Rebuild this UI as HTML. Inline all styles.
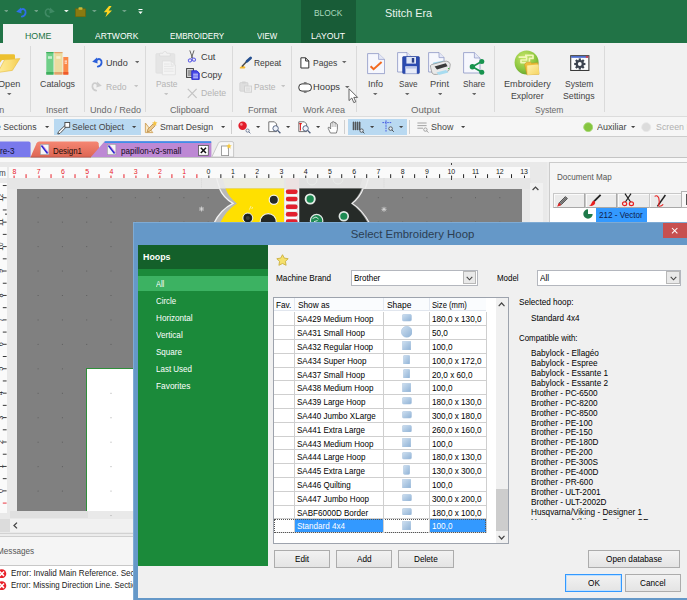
<!DOCTYPE html>
<html><head><meta charset="utf-8"><title>Stitch Era</title>
<style>
html,body{margin:0;padding:0;}
body{width:687px;height:600px;overflow:hidden;position:relative;background:#ececec;font-family:"Liberation Sans",sans-serif;}
#root{position:absolute;left:0;top:0;width:687px;height:600px;overflow:hidden;}
#root div,#root span,#root svg{position:absolute;}
#root span{white-space:nowrap;}
#root div{box-sizing:border-box;}
</style></head><body><div id="root">
<div style="left:0.00px;top:0.00px;width:687.00px;height:43.00px;background:#217346;"></div>
<div style="left:301.00px;top:0.00px;width:55.00px;height:43.00px;background:#185c37;"></div>
<div style="left:3.00px;top:24.00px;width:70.00px;height:19.50px;background:#f1f1f1;"></div>
<span style="left:24.50px;top:30.00px;font-size:9.80px;line-height:11.27px;color:#217346;transform:scaleX(0.901);transform-origin:0 50%;">HOME</span>
<span style="left:94.70px;top:30.00px;font-size:9.80px;line-height:11.27px;color:#fff;transform:scaleX(0.868);transform-origin:0 50%;">ARTWORK</span>
<span style="left:170.00px;top:30.00px;font-size:9.80px;line-height:11.27px;color:#fff;transform:scaleX(0.826);transform-origin:0 50%;">EMBROIDERY</span>
<span style="left:256.80px;top:30.00px;font-size:9.80px;line-height:11.27px;color:#fff;transform:scaleX(0.803);transform-origin:0 50%;">VIEW</span>
<span style="left:314.40px;top:7.00px;font-size:9.80px;line-height:11.27px;color:#a9d9bd;transform:scaleX(0.855);transform-origin:0 50%;">BLOCK</span>
<span style="left:311.40px;top:30.00px;font-size:9.80px;line-height:11.27px;color:#fff;transform:scaleX(0.886);transform-origin:0 50%;">LAYOUT</span>
<span style="left:385.00px;top:7.00px;font-size:10.89px;line-height:12.52px;color:#eaf3ee;">Stitch Era</span>
<svg style="left:3.64px;top:10.02px" width="4.72" height="2.36" viewBox="0 0 4.72 2.36"><path d="M0 0H4.72L2.36 2.36Z" fill="#6fa287"/></svg>
<svg style="left:33.64px;top:10.02px" width="4.72" height="2.36" viewBox="0 0 4.72 2.36"><path d="M0 0H4.72L2.36 2.36Z" fill="#6fa287"/></svg>
<svg style="left:63.94px;top:10.02px" width="4.72" height="2.36" viewBox="0 0 4.72 2.36"><path d="M0 0H4.72L2.36 2.36Z" fill="#e6efe9"/></svg>
<svg style="left:92.34px;top:10.02px" width="4.72" height="2.36" viewBox="0 0 4.72 2.36"><path d="M0 0H4.72L2.36 2.36Z" fill="#6fa287"/></svg>
<svg style="left:122.14px;top:10.02px" width="4.72" height="2.36" viewBox="0 0 4.72 2.36"><path d="M0 0H4.72L2.36 2.36Z" fill="#6fa287"/></svg>
<svg style="left:14.60px;top:5.80px" width="12" height="12" viewBox="0 0 12 12"><path d="M1.2 5.8 L6 1.4 L6.6 7.6Z" fill="#2f6fe8"/><path d="M5.4 4.4 C8 1.6 11 3.6 10.6 6.8 C10.3 9 8.6 10.2 6.8 10.6" fill="none" stroke="#2f6fe8" stroke-width="1.8" stroke-linecap="round"/></svg>
<svg style="left:44.00px;top:5.80px" width="12" height="12" viewBox="0 0 12 12"><path d="M10.8 5.8 L6 1.4 L5.4 7.6Z" fill="#3f8a64"/><path d="M6.6 4.4 C4 1.6 1 3.6 1.4 6.8 C1.7 9 3.4 10.2 5.2 10.6" fill="none" stroke="#3f8a64" stroke-width="1.6" stroke-linecap="round"/></svg>
<svg style="left:75.00px;top:6.50px" width="11" height="10" viewBox="0 0 11 10"><rect x="0.5" y="1.8" width="10" height="8" fill="#8a7a10" stroke="#6e6208" stroke-width="0.6"/><rect x="3.5" y="0.3" width="4" height="2.4" rx="0.8" fill="#c9b93a"/></svg>
<svg style="left:103.40px;top:5.80px" width="10" height="11.4" viewBox="0 0 10 11.4"><path d="M6 0 L0.8 6.2 H4.2 L2.4 11.2 L9 4.4 H5.6 L8.6 0Z" fill="#ffd320"/></svg>
<svg style="left:138.00px;top:9.20px" width="5" height="6" viewBox="0 0 5 6"><rect x="0.5" y="0" width="4" height="1" fill="#fff"/><path d="M0.3 2.6H4.7L2.5 5Z" fill="#fff"/></svg>
<div style="left:0.00px;top:43.00px;width:687.00px;height:74.00px;background:#f1f1f1;"></div>
<div style="left:0.00px;top:116.40px;width:687.00px;height:1.00px;background:#dcdcdc;"></div>
<div style="left:29.50px;top:45.50px;width:1.00px;height:66.50px;background:#dadada;"></div>
<div style="left:84.00px;top:45.50px;width:1.00px;height:66.50px;background:#dadada;"></div>
<div style="left:145.30px;top:45.50px;width:1.00px;height:66.50px;background:#dadada;"></div>
<div style="left:231.90px;top:45.50px;width:1.00px;height:66.50px;background:#dadada;"></div>
<div style="left:291.00px;top:45.50px;width:1.00px;height:66.50px;background:#dadada;"></div>
<div style="left:355.80px;top:45.50px;width:1.00px;height:66.50px;background:#dadada;"></div>
<div style="left:493.70px;top:45.50px;width:1.00px;height:66.50px;background:#dadada;"></div>
<div style="left:603.50px;top:45.50px;width:1.00px;height:66.50px;background:#dadada;"></div>
<svg style="left:-6.00px;top:53.00px" width="27" height="22" viewBox="0 0 27 22"><defs><linearGradient id="fg" x1="0" y1="0" x2="1" y2="0"><stop offset="0" stop-color="#fff0a8"/><stop offset="0.6" stop-color="#fbe07a"/><stop offset="1" stop-color="#f4cc52"/></linearGradient></defs><path d="M0 2.6 Q0 1.2 1.5 1.2 H19.6 Q21 1.2 21 2.6 V7 H8 L0 18Z" fill="#ecc030"/>
<path d="M0 19.4 L4 19.2 L10.6 6.8 L25.9 5.6 L18.4 17.4 L6 19.2Z" fill="url(#fg)" stroke="#e8bc3c" stroke-width="0.6"/></svg>
<span style="left:-2.30px;top:78.00px;font-size:9.80px;line-height:11.27px;color:#444;transform:scaleX(0.930);transform-origin:0 50%;">Open</span>
<svg style="left:7.06px;top:93.18px" width="4.48" height="2.24" viewBox="0 0 4.484 2.242"><path d="M0 0H4.484L2.242 2.242Z" fill="#666"/></svg>
<span style="left:-15.13px;top:104.00px;font-size:9.80px;line-height:11.27px;color:#6a6a6a;transform:scaleX(0.910);transform-origin:0 50%;">Main</span>
<svg style="left:45.50px;top:52.00px" width="24" height="24" viewBox="0 0 24 24"><rect x="0.3" y="0" width="7.2" height="22.6" fill="#6fcf88"/><rect x="0.3" y="0" width="7.2" height="1.2" fill="#3fae5e"/><rect x="0.3" y="20" width="7.2" height="2.6" fill="#3fae5e"/><rect x="2" y="4.2" width="4" height="2.6" fill="#c6efd0"/>
<rect x="8.3" y="0" width="8.2" height="22.6" fill="#ecdca0"/><rect x="8.3" y="0" width="8.2" height="1.2" fill="#e3a36c"/><rect x="8.3" y="20" width="8.2" height="2.6" fill="#e3a36c"/><rect x="10.3" y="4.2" width="4.2" height="2.6" fill="#f8f0d0"/>
<rect x="17.3" y="5" width="5" height="17.6" fill="#fb8848"/><rect x="17.3" y="20" width="5" height="2.6" fill="#ee5a2a"/><rect x="18.6" y="8.6" width="2.4" height="1" fill="#fff"/><rect x="18.6" y="10.6" width="2.4" height="1" fill="#fff"/></svg>
<span style="left:39.80px;top:78.00px;font-size:9.80px;line-height:11.27px;color:#444;transform:scaleX(0.905);transform-origin:0 50%;">Catalogs</span>
<span style="left:45.80px;top:104.00px;font-size:9.80px;line-height:11.27px;color:#6a6a6a;transform:scaleX(0.898);transform-origin:0 50%;">Insert</span>
<svg style="left:91.00px;top:56.00px" width="12" height="12" viewBox="0 0 12 12"><path d="M1.2 5.8 L6 1.4 L6.6 7.6Z" fill="#2b5fd9"/><path d="M5.4 4.4 C8 1.6 11 3.6 10.6 6.8 C10.3 9 8.6 10.2 6.8 10.6" fill="none" stroke="#2b5fd9" stroke-width="1.8" stroke-linecap="round"/></svg>
<span style="left:105.80px;top:57.00px;font-size:9.80px;line-height:11.27px;color:#3a3a3a;transform:scaleX(0.926);transform-origin:0 50%;">Undo</span>
<svg style="left:134.96px;top:61.28px" width="4.48" height="2.24" viewBox="0 0 4.484 2.242"><path d="M0 0H4.484L2.242 2.242Z" fill="#666"/></svg>
<svg style="left:91.40px;top:80.40px" width="12" height="12" viewBox="0 0 12 12"><path d="M10.8 5.8 L6 1.4 L5.4 7.6Z" fill="#cdcdcd"/><path d="M6.6 4.4 C4 1.6 1 3.6 1.4 6.8 C1.7 9 3.4 10.2 5.2 10.6" fill="none" stroke="#cdcdcd" stroke-width="1.7" stroke-linecap="round"/></svg>
<span style="left:105.80px;top:81.00px;font-size:9.80px;line-height:11.27px;color:#b4b4b4;transform:scaleX(0.875);transform-origin:0 50%;">Redo</span>
<svg style="left:133.56px;top:85.48px" width="4.48" height="2.24" viewBox="0 0 4.484 2.242"><path d="M0 0H4.484L2.242 2.242Z" fill="#c4c4c4"/></svg>
<span style="left:89.60px;top:104.00px;font-size:9.80px;line-height:11.27px;color:#6a6a6a;transform:scaleX(0.927);transform-origin:0 50%;">Undo / Redo</span>
<svg style="left:155.00px;top:50.50px" width="22" height="25" viewBox="0 0 22 25"><rect x="0.8" y="2.6" width="19" height="19.6" rx="1.2" fill="#e5e5e5" stroke="#dedede" stroke-width="0.6"/>
<path d="M4.6 5 V3 Q4.6 2.2 5.4 2.2 H8 Q8.4 0.4 9.9 0.4 Q11.4 0.4 11.8 2.2 H14.4 Q15.2 2.2 15.2 3 V5Z" fill="#f2f2f2" stroke="#d6d6d6" stroke-width="0.6"/>
<path d="M7.4 10 H16.2 L20.4 14 V23.8 H7.4Z" fill="#f4f4f4" stroke="#dcdcdc" stroke-width="0.7"/><path d="M16.2 10 V14 H20.4" fill="none" stroke="#dcdcdc" stroke-width="0.6"/>
<path d="M9 13H14.6M9 15.4H18.6M9 17.8H18.6M9 20.2H18.6" stroke="#e2e2e2" stroke-width="0.8"/></svg>
<span style="left:155.50px;top:78.00px;font-size:9.80px;line-height:11.27px;color:#b4b4b4;transform:scaleX(0.858);transform-origin:0 50%;">Paste</span>
<svg style="left:163.76px;top:93.18px" width="4.48" height="2.24" viewBox="0 0 4.484 2.242"><path d="M0 0H4.484L2.242 2.242Z" fill="#c4c4c4"/></svg>
<svg style="left:187.00px;top:50.00px" width="10" height="14" viewBox="0 0 10 14"><path d="M2.8 0.4 L5.6 8.2 M7 0.4 L4.4 8.2" stroke="#555" stroke-width="0.9" fill="none"/><ellipse cx="3" cy="10.4" rx="1.7" ry="1.5" transform="rotate(-25 3 10.4)" fill="none" stroke="#6262e6" stroke-width="1.1"/><ellipse cx="6.9" cy="9.6" rx="1.7" ry="1.5" transform="rotate(25 6.9 9.6)" fill="none" stroke="#6262e6" stroke-width="1.1"/></svg>
<span style="left:201.00px;top:51.00px;font-size:9.80px;line-height:11.27px;color:#3a3a3a;transform:scaleX(0.944);transform-origin:0 50%;">Cut</span>
<svg style="left:185.50px;top:68.20px" width="14" height="12" viewBox="0 0 14 12"><rect x="0.6" y="0.6" width="6.8" height="8.8" fill="#e8e8e8" stroke="#3c3c3c" stroke-width="1"/><path d="M1.8 3H6.2M1.8 5H6.2M1.8 7H6.2" stroke="#3c3c3c" stroke-width="0.9"/><path d="M5.8 2.8 H10.8 L13.2 5 V11.4 H5.8Z" fill="#4a4ae8" stroke="#2626c8" stroke-width="0.9"/><path d="M7.2 6.2H12M7.2 8H12M7.2 9.8H12" stroke="#dfe2ff" stroke-width="0.9"/></svg>
<span style="left:201.00px;top:69.00px;font-size:9.80px;line-height:11.27px;color:#3a3a3a;transform:scaleX(0.918);transform-origin:0 50%;">Copy</span>
<svg style="left:186.80px;top:87.60px" width="11" height="11" viewBox="0 0 11 11"><path d="M0.8 0.8 L9.6 9.8 M9.6 0.8 L0.8 9.8" stroke="#c4c4c4" stroke-width="1.2" fill="none"/></svg>
<span style="left:201.00px;top:87.00px;font-size:9.80px;line-height:11.27px;color:#b4b4b4;transform:scaleX(0.890);transform-origin:0 50%;">Delete</span>
<span style="left:170.00px;top:104.00px;font-size:9.80px;line-height:11.27px;color:#6a6a6a;transform:scaleX(0.930);transform-origin:0 50%;">Clipboard</span>
<svg style="left:238.50px;top:56.00px" width="14" height="13" viewBox="0 0 14 13"><path d="M0.8 11.6 L3.4 9.6 L6.6 11 L5.6 12.4 H0.8Z" fill="#f5b92e"/><path d="M3 10.4 L8.6 4.6" stroke="#4a4a4a" stroke-width="1.5"/><path d="M8 5.2 L11.6 2" stroke="#254f90" stroke-width="2.8" stroke-linecap="round"/></svg>
<span style="left:253.80px;top:57.00px;font-size:9.80px;line-height:11.27px;color:#3a3a3a;transform:scaleX(0.861);transform-origin:0 50%;">Repeat</span>
<svg style="left:238.50px;top:81.00px" width="14" height="12" viewBox="0 0 14 12"><rect x="0.8" y="1.6" width="8.2" height="8.6" rx="0.8" fill="#dedede" stroke="#cfcfcf" stroke-width="0.7"/><rect x="3" y="0.4" width="3.8" height="2.2" rx="0.6" fill="#d2d2d2"/>
<rect x="5.6" y="5" width="7" height="6.2" fill="#ececec" stroke="#cdcdcd" stroke-width="0.8"/><path d="M7 7.2H11M7 9H11" stroke="#cfcfcf" stroke-width="0.6"/></svg>
<span style="left:253.80px;top:81.00px;font-size:9.80px;line-height:11.27px;color:#b4b4b4;transform:scaleX(0.858);transform-origin:0 50%;">Paste</span>
<svg style="left:280.76px;top:85.48px" width="4.48" height="2.24" viewBox="0 0 4.484 2.242"><path d="M0 0H4.484L2.242 2.242Z" fill="#c4c4c4"/></svg>
<span style="left:247.70px;top:104.00px;font-size:9.80px;line-height:11.27px;color:#6a6a6a;transform:scaleX(0.928);transform-origin:0 50%;">Format</span>
<svg style="left:299.60px;top:56.80px" width="10" height="12" viewBox="0 0 10 12"><path d="M0.9 0.8 H5.6 L8.8 4 V11 H0.9Z M5.6 0.8 V4 H8.8" fill="#fff" stroke="#333" stroke-width="1" stroke-linejoin="round"/></svg>
<span style="left:312.80px;top:57.00px;font-size:9.80px;line-height:11.27px;color:#3a3a3a;transform:scaleX(0.871);transform-origin:0 50%;">Pages</span>
<svg style="left:342.36px;top:61.28px" width="4.48" height="2.24" viewBox="0 0 4.484 2.242"><path d="M0 0H4.484L2.242 2.242Z" fill="#666"/></svg>
<svg style="left:297.50px;top:80.50px" width="15" height="13" viewBox="0 0 15 13"><rect x="0.8" y="2.9" width="12.6" height="7.2" rx="3.2" fill="#fff" stroke="#333" stroke-width="1"/><path d="M5.8 1.8H8.6M5.8 11.2H8.6" stroke="#555" stroke-width="1"/></svg>
<span style="left:313.00px;top:81.00px;font-size:9.80px;line-height:11.27px;color:#3a3a3a;transform:scaleX(0.953);transform-origin:0 50%;">Hoops</span>
<svg style="left:345.36px;top:85.78px" width="4.48" height="2.24" viewBox="0 0 4.484 2.242"><path d="M0 0H4.484L2.242 2.242Z" fill="#666"/></svg>
<span style="left:303.00px;top:104.00px;font-size:9.80px;line-height:11.27px;color:#6a6a6a;transform:scaleX(0.922);transform-origin:0 50%;">Work Area</span>
<svg style="left:348.40px;top:87.60px" width="11" height="16" viewBox="0 0 11 16"><path d="M1 0.8 V12.6 L3.8 10 L5.8 14.6 L7.8 13.8 L5.8 9.4 H9.6Z" fill="#fff" stroke="#555" stroke-width="0.9" stroke-linejoin="round"/></svg>
<svg style="left:366.80px;top:53.20px" width="18.5" height="21.5" viewBox="0 0 18.5 21.5"><path d="M0.6 0.6 H11.6 L17.6 6.4 V20.6 H0.6Z" fill="#f6f7fd" stroke="#8c95c4" stroke-width="0.8" stroke-linejoin="round"/><path d="M11.6 0.6 V6.4 H17.6" fill="#e4e7f6" stroke="#8c95c4" stroke-width="0.7"/><path d="M3.6 13.2 L6.6 16.2 L14.6 9" fill="none" stroke="#f26a21" stroke-width="2"/></svg>
<span style="left:367.90px;top:78.00px;font-size:9.80px;line-height:11.27px;color:#444;transform:scaleX(0.924);transform-origin:0 50%;">Info</span>
<svg style="left:373.16px;top:93.18px" width="4.48" height="2.24" viewBox="0 0 4.484 2.242"><path d="M0 0H4.484L2.242 2.242Z" fill="#666"/></svg>
<svg style="left:397.00px;top:52.00px" width="23" height="23" viewBox="0 0 23 23"><path d="M0.6 0.6 H10 L15 5.6 V20 H0.6Z" fill="#f6f7fd" stroke="#8c95c4" stroke-width="0.8" stroke-linejoin="round"/><path d="M10 0.6 V5.6 H15" fill="#e4e7f6" stroke="#8c95c4" stroke-width="0.7"/><rect x="5.6" y="4.6" width="16.8" height="17" rx="1" fill="#2b4bb0" stroke="#1f3a94" stroke-width="0.6"/>
<rect x="9.4" y="5" width="9.6" height="6.6" fill="#dfe6f6"/><rect x="14.8" y="6" width="2.4" height="4.6" fill="#2b3f86"/><rect x="8.4" y="14.4" width="11.4" height="7.2" fill="#e8ecf8"/><rect x="8.4" y="14.4" width="11.4" height="2.2" fill="#b9c6ea"/></svg>
<span style="left:398.80px;top:78.00px;font-size:9.80px;line-height:11.27px;color:#444;transform:scaleX(0.828);transform-origin:0 50%;">Save</span>
<svg style="left:405.36px;top:93.18px" width="4.48" height="2.24" viewBox="0 0 4.484 2.242"><path d="M0 0H4.484L2.242 2.242Z" fill="#666"/></svg>
<svg style="left:428.40px;top:52.00px" width="24.5" height="24" viewBox="0 0 24.5 24"><path d="M0.6 0.6 H11 L16 5.6 V20 H0.6Z" fill="#f6f7fd" stroke="#8c95c4" stroke-width="0.8" stroke-linejoin="round"/><path d="M11 0.6 V5.6 H16" fill="#e4e7f6" stroke="#8c95c4" stroke-width="0.7"/><path d="M5.4 10.6 L16 8.6 L13 13 L3.8 14.6Z" fill="#9fd8ef"/>
<path d="M2.6 15.4 Q1.6 13.4 3.6 12.6 L15.6 9.4 Q19 8.6 21 10.2 Q23 12 22 14.4 L21.4 17.4 Q21 19 19 19.4 L8.6 22.4 Q5.4 23 4 21Z" fill="#e9e9e9" stroke="#8a8a8a" stroke-width="0.7"/>
<path d="M6.6 14.4 L17.8 11.2 L19.6 14.2 L9 17.6Z" fill="#3a3a3a"/><path d="M8.4 20.6 L18 18 L20.4 20.4 L11 23Z" fill="#a8dcf0"/><circle cx="20.6" cy="16.6" r="0.7" fill="#28b828"/></svg>
<span style="left:430.40px;top:78.00px;font-size:9.80px;line-height:11.27px;color:#444;transform:scaleX(0.943);transform-origin:0 50%;">Print</span>
<svg style="left:437.56px;top:93.18px" width="4.48" height="2.24" viewBox="0 0 4.484 2.242"><path d="M0 0H4.484L2.242 2.242Z" fill="#666"/></svg>
<svg style="left:462.60px;top:51.60px" width="23" height="23" viewBox="0 0 23 23"><path d="M0.6 0.6 H11.4 L17 6 V21 H0.6Z" fill="#f6f7fd" stroke="#8c95c4" stroke-width="0.8" stroke-linejoin="round"/><path d="M11.4 0.6 V6 H17" fill="#e4e7f6" stroke="#8c95c4" stroke-width="0.7"/><path d="M9.4 14.8 L18.6 9.6 M9.4 14.8 L18.6 20" stroke="#17934e" stroke-width="1.7"/><circle cx="9.4" cy="14.8" r="2.7" fill="#17934e"/><circle cx="18.8" cy="9.4" r="2.5" fill="#17934e"/><circle cx="18.8" cy="20.2" r="2.5" fill="#17934e"/></svg>
<span style="left:462.80px;top:78.00px;font-size:9.80px;line-height:11.27px;color:#444;transform:scaleX(0.849);transform-origin:0 50%;">Share</span>
<svg style="left:471.56px;top:93.18px" width="4.48" height="2.24" viewBox="0 0 4.484 2.242"><path d="M0 0H4.484L2.242 2.242Z" fill="#666"/></svg>
<span style="left:410.60px;top:104.00px;font-size:9.80px;line-height:11.27px;color:#6a6a6a;transform:scaleX(0.982);transform-origin:0 50%;">Output</span>
<svg style="left:514.00px;top:50.00px" width="26" height="26" viewBox="0 0 26 26"><defs><linearGradient id="fg2" x1="0" y1="0" x2="1" y2="1"><stop offset="0" stop-color="#fff2b0"/><stop offset="1" stop-color="#f6d460"/></linearGradient><radialGradient id="gg" cx="0.4" cy="0.3" r="0.8"><stop offset="0" stop-color="#c8e66a"/><stop offset="0.6" stop-color="#8cc63f"/><stop offset="1" stop-color="#5a9a28"/></radialGradient></defs>
<circle cx="12.6" cy="12.6" r="12" fill="url(#gg)"/>
<path d="M4.6 7.2 H12.6 V10 H7 V12.6 H15.4 M11 5.4 H19 V8.4 H15.4 V15" fill="none" stroke="#f2f7b8" stroke-width="1.7" stroke-linejoin="round"/>
<path d="M10.6 14.6 L12.2 12.4 L16.4 12 L17.6 13.2 L23.8 12.8 L25 24.2 L13 24.8Z" fill="#eebf3c" stroke="#c8962a" stroke-width="0.6"/><path d="M13.2 15.6 L24.4 14.4 L25.2 24.2 L13.4 25Z" fill="url(#fg2)"/></svg>
<span style="left:504.00px;top:78.00px;font-size:9.80px;line-height:11.27px;color:#444;transform:scaleX(0.934);transform-origin:0 50%;">Embroidery</span>
<span style="left:511.00px;top:90.00px;font-size:9.80px;line-height:11.27px;color:#444;transform:scaleX(0.893);transform-origin:0 50%;">Explorer</span>
<svg style="left:569.60px;top:54.80px" width="20" height="16.4" viewBox="0 0 20 16.4"><rect x="0.7" y="0.7" width="18.2" height="14.8" fill="#fdfdfd" stroke="#3a3a3a" stroke-width="1.1"/><rect x="1.2" y="1.2" width="17.2" height="1.5" fill="#2f55c8"/><rect x="15.8" y="1.2" width="2.6" height="1.5" fill="#e03a3a"/>
<g transform="translate(9.8 9)" fill="#3c434e"><circle r="4.1"/><rect x="-1.1" y="-5.6" width="2.2" height="2.6" transform="rotate(0)"/><rect x="-1.1" y="-5.6" width="2.2" height="2.6" transform="rotate(45)"/><rect x="-1.1" y="-5.6" width="2.2" height="2.6" transform="rotate(90)"/><rect x="-1.1" y="-5.6" width="2.2" height="2.6" transform="rotate(135)"/><rect x="-1.1" y="-5.6" width="2.2" height="2.6" transform="rotate(180)"/><rect x="-1.1" y="-5.6" width="2.2" height="2.6" transform="rotate(225)"/><rect x="-1.1" y="-5.6" width="2.2" height="2.6" transform="rotate(270)"/><rect x="-1.1" y="-5.6" width="2.2" height="2.6" transform="rotate(315)"/><circle r="1.9" fill="#fdfdfd"/></g></svg>
<span style="left:564.80px;top:78.00px;font-size:9.80px;line-height:11.27px;color:#444;transform:scaleX(0.869);transform-origin:0 50%;">System</span>
<span style="left:563.40px;top:90.00px;font-size:9.80px;line-height:11.27px;color:#444;transform:scaleX(0.892);transform-origin:0 50%;">Settings</span>
<span style="left:535.00px;top:104.00px;font-size:9.80px;line-height:11.27px;color:#6a6a6a;transform:scaleX(0.869);transform-origin:0 50%;">System</span>
<div style="left:0.00px;top:117.40px;width:687.00px;height:18.80px;background:#f6f6f6;"></div>
<div style="left:0.00px;top:136.00px;width:687.00px;height:1.00px;background:#cdcdcd;"></div>
<div style="left:53.50px;top:118.80px;width:87.20px;height:16.20px;background:#b9d9f1;"></div>
<div style="left:347.50px;top:119.00px;width:59.50px;height:15.80px;background:#b9d9f1;"></div>
<span style="left:-3.60px;top:121.00px;font-size:9.70px;line-height:11.15px;color:#444;transform:scaleX(0.896);transform-origin:0 50%;">e Sections</span>
<svg style="left:45.48px;top:125.94px" width="4.25" height="2.12" viewBox="0 0 4.248 2.124"><path d="M0 0H4.248L2.124 2.124Z" fill="#444"/></svg>
<svg style="left:56.50px;top:120.50px" width="14" height="14" viewBox="0 0 14 14"><path d="M8.8 6.4 L3 12.4 L0.8 13 L1.4 10.8 L7.4 5Z" fill="#fff" stroke="#444" stroke-width="0.9" stroke-linejoin="round"/><rect x="7.9" y="1.5" width="4.8" height="4.8" fill="#fff" stroke="#444" stroke-width="0.9"/></svg>
<span style="left:72.00px;top:121.00px;font-size:9.70px;line-height:11.15px;color:#444;transform:scaleX(0.901);transform-origin:0 50%;">Select Object</span>
<svg style="left:132.48px;top:125.94px" width="4.25" height="2.12" viewBox="0 0 4.248 2.124"><path d="M0 0H4.248L2.124 2.124Z" fill="#444"/></svg>
<svg style="left:144.00px;top:120.00px" width="14" height="14" viewBox="0 0 14 14"><path d="M1.4 3 L1.4 12.6 L8.8 12.6Z" fill="#f8e8c4" stroke="#cfa25a" stroke-width="0.9" stroke-linejoin="round"/><path d="M3.2 12 L4 9 L9.2 3.8 L11.2 5.8 L6 11Z" fill="#ecca8c" stroke="#b98a48" stroke-width="0.8" stroke-linejoin="round"/><path d="M10.8 0.4 L11.5 2.3 L13.5 2.5 L12 3.8 L12.5 5.8 L10.8 4.7 L9.1 5.8 L9.6 3.8 L8.1 2.5 L10.1 2.3Z" fill="#f4c240"/></svg>
<span style="left:159.60px;top:121.00px;font-size:9.70px;line-height:11.15px;color:#444;transform:scaleX(0.904);transform-origin:0 50%;">Smart Design</span>
<svg style="left:220.88px;top:125.94px" width="4.25" height="2.12" viewBox="0 0 4.248 2.124"><path d="M0 0H4.248L2.124 2.124Z" fill="#444"/></svg>
<div style="left:231.40px;top:120.00px;width:1.00px;height:14.00px;background:#cfcfcf;"></div>
<svg style="left:238.00px;top:120.50px" width="13" height="13" viewBox="0 0 13 13"><circle cx="4.6" cy="4.8" r="4.2" fill="#e21c2a"/><circle cx="3.4" cy="3.4" r="1.3" fill="#f78a90"/><circle cx="9.6" cy="9.6" r="1.6" fill="none" stroke="#5a6a8a" stroke-width="0.8"/><path d="M10.8 10.8 L12.4 12.4" stroke="#5a6a8a" stroke-width="0.9"/></svg>
<svg style="left:256.48px;top:125.94px" width="4.25" height="2.12" viewBox="0 0 4.248 2.124"><path d="M0 0H4.248L2.124 2.124Z" fill="#444"/></svg>
<svg style="left:267.60px;top:120.50px" width="14" height="13" viewBox="0 0 14 13"><path d="M0.8 0.8 H6.4 L8.6 3 V10.6 H0.8Z" fill="#fff" stroke="#666" stroke-width="0.9"/><circle cx="7.6" cy="7.4" r="2.7" fill="#eef2fa" stroke="#4a5a7a" stroke-width="0.9"/><path d="M9.6 9.4 L12.4 12.2" stroke="#4a5a7a" stroke-width="1.3"/></svg>
<svg style="left:286.48px;top:125.94px" width="4.25" height="2.12" viewBox="0 0 4.248 2.124"><path d="M0 0H4.248L2.124 2.124Z" fill="#444"/></svg>
<svg style="left:297.60px;top:120.50px" width="14" height="13" viewBox="0 0 14 13"><path d="M0.8 0.8 H6.4 L8.6 3 V10.6 H0.8Z" fill="#fff" stroke="#666" stroke-width="0.9"/><path d="M2.4 2.4 V9.4 M1.2 2.6 H3.8" stroke="#e02020" stroke-width="1.1"/><circle cx="7.6" cy="7.4" r="2.7" fill="#eef2fa" stroke="#4a5a7a" stroke-width="0.9"/><path d="M9.6 9.4 L12.4 12.2" stroke="#4a5a7a" stroke-width="1.3"/></svg>
<svg style="left:315.88px;top:125.94px" width="4.25" height="2.12" viewBox="0 0 4.248 2.124"><path d="M0 0H4.248L2.124 2.124Z" fill="#444"/></svg>
<svg style="left:327.00px;top:120.00px" width="14" height="14" viewBox="0 0 14 14"><path d="M3.4 13 L1.2 8.4 Q0.8 7 2.2 7.2 L3.6 9 V3.2 Q4.4 2.2 5.2 3.2 V2 Q6.2 1 7 2 V2.6 Q8 1.8 8.8 2.8 V4 Q9.8 3.4 10.4 4.4 V9.4 L9.4 13Z" fill="#fff" stroke="#666" stroke-width="0.8" stroke-linejoin="round"/><path d="M5.2 3.2V7M7 2.6V7M8.8 4V7" stroke="#888" stroke-width="0.6"/></svg>
<div style="left:344.20px;top:120.00px;width:1.00px;height:14.00px;background:#cfcfcf;"></div>
<svg style="left:351.60px;top:120.60px" width="13" height="13" viewBox="0 0 13 13"><path d="M0.4 2H9M0.4 4H9M0.4 6H9M0.4 8H9M1.5 0.6V9.2M3.5 0.6V9.2M5.5 0.6V9.2M7.5 0.6V9.2" stroke="#444" stroke-width="0.8"/><circle cx="9.6" cy="9.6" r="1.7" fill="#dfeaf6" stroke="#444" stroke-width="0.8"/><path d="M10.8 10.8L12.4 12.4" stroke="#444" stroke-width="0.9"/></svg>
<svg style="left:369.58px;top:125.94px" width="4.25" height="2.12" viewBox="0 0 4.248 2.124"><path d="M0 0H4.248L2.124 2.124Z" fill="#444"/></svg>
<svg style="left:381.60px;top:120.40px" width="14" height="13" viewBox="0 0 14 13"><path d="M0.4 2.6H9.6M4 0.4V12" stroke="#3a50e0" stroke-width="0.9" stroke-dasharray="1.6 0.8"/><circle cx="8.6" cy="8.6" r="1.8" fill="#dfeaf6" stroke="#444" stroke-width="0.8"/><path d="M9.9 9.9L11.8 11.8" stroke="#444" stroke-width="0.9"/></svg>
<svg style="left:399.38px;top:125.94px" width="4.25" height="2.12" viewBox="0 0 4.248 2.124"><path d="M0 0H4.248L2.124 2.124Z" fill="#444"/></svg>
<div style="left:409.00px;top:120.00px;width:1.00px;height:14.00px;background:#cfcfcf;"></div>
<svg style="left:416.60px;top:121.60px" width="13" height="12" viewBox="0 0 13 12"><path d="M0.4 1H9.6M0.4 3.6H9.6M0.4 6.2H6" stroke="#9a9a9a" stroke-width="0.9"/><circle cx="8.4" cy="7.6" r="1.7" fill="#f4f4f4" stroke="#888" stroke-width="0.7"/><path d="M9.6 8.8L11.4 10.6" stroke="#888" stroke-width="0.8"/></svg>
<span style="left:431.40px;top:121.00px;font-size:9.70px;line-height:11.15px;color:#444;transform:scaleX(0.923);transform-origin:0 50%;">Show</span>
<svg style="left:460.88px;top:125.94px" width="4.25" height="2.12" viewBox="0 0 4.248 2.124"><path d="M0 0H4.248L2.124 2.124Z" fill="#444"/></svg>
<svg style="left:582.60px;top:121.80px" width="10.4" height="10.4" viewBox="0 0 10.4 10.4"><circle cx="5.2" cy="5.2" r="4.5" fill="#86c540" stroke="#a8d878" stroke-width="0.9"/></svg>
<span style="left:597.00px;top:121.00px;font-size:9.70px;line-height:11.15px;color:#444;transform:scaleX(0.927);transform-origin:0 50%;">Auxiliar</span>
<svg style="left:631.28px;top:125.94px" width="4.25" height="2.12" viewBox="0 0 4.248 2.124"><path d="M0 0H4.248L2.124 2.124Z" fill="#444"/></svg>
<svg style="left:641.40px;top:121.80px" width="10.4" height="10.4" viewBox="0 0 10.4 10.4"><circle cx="5.2" cy="5.2" r="4.5" fill="#dcdcdc" stroke="#e8e8e8" stroke-width="0.9"/></svg>
<span style="left:656.00px;top:121.00px;font-size:9.70px;line-height:11.15px;color:#b0b0b0;transform:scaleX(0.910);transform-origin:0 50%;">Screen Ruler</span>
<div style="left:0.00px;top:137.00px;width:687.00px;height:20.00px;background:#ececec;"></div>
<div style="left:0.00px;top:157.00px;width:687.00px;height:1.00px;background:#c4c4c4;"></div>
<div style="left:0.00px;top:158.00px;width:687.00px;height:4.00px;background:#f8f8f8;"></div>
<svg style="left:0.00px;top:141.00px" width="240" height="17" viewBox="0 0 240 17"><defs><linearGradient id="tg2" x1="0" y1="0" x2="0" y2="1"><stop offset="0" stop-color="#f58672"/><stop offset="1" stop-color="#dd6654"/></linearGradient></defs>
<path d="M0 0.4 H28.6 Q30.6 0.4 30.6 2.4 V16 H0Z" fill="#7979ec"/>
<path d="M30.6 16 L36.6 2.2 Q37.4 0.6 39.2 0.6 H96.4 Q98.2 0.6 98.6 2.2 L100 16Z" fill="url(#tg2)"/><path d="M30.6 16H91" stroke="#c2584a" stroke-width="0.9"/>
<path d="M91 16 L103.6 1.6 Q104.8 0.2 106.6 0.2 H210 Q211.4 0.2 211.4 1.6 V16Z" fill="#bd88d4"/><path d="M104.6 1.1 H211.2" stroke="#3f8fe8" stroke-width="1.9"/>
<path d="M211.8 16 L218.4 2.2 Q219.2 0.6 221 0.6 H232 Q233.6 0.6 233.6 2.2 V16Z" fill="#f7f7f7" stroke="#bcbcbc" stroke-width="0.8"/>
<rect x="221.6" y="5" width="7" height="9.6" fill="#fff" stroke="#8a8a8a" stroke-width="0.8"/><path d="M229 2.2 L229.8 4.2 L231.8 4.4 L230.2 5.8 L230.8 7.8 L229 6.6 L227.2 7.8 L227.8 5.8 L226.2 4.4 L228.2 4.2Z" fill="#f8c838"/>
</svg>
<svg style="left:40.40px;top:144.20px" width="10" height="12" viewBox="0 0 10 12"><rect x="0.3" y="0.3" width="8.6" height="10.4" fill="#f6f6f6" stroke="#9a9a9a" stroke-width="0.6"/><path d="M1.4 1.4 L7.6 9.6" stroke="#2a2acc" stroke-width="1.6"/><path d="M2.4 1 L8.4 8.6" stroke="#d04ad0" stroke-width="0.6"/></svg>
<svg style="left:107.40px;top:144.20px" width="10" height="12" viewBox="0 0 10 12"><rect x="0.3" y="0.3" width="8.6" height="10.4" fill="#f6f6f6" stroke="#9a9a9a" stroke-width="0.6"/><path d="M1.4 1.4 L7.6 9.6" stroke="#2a2acc" stroke-width="1.6"/><path d="M2.4 1 L8.4 8.6" stroke="#d04ad0" stroke-width="0.6"/></svg>
<span style="left:0.00px;top:146.00px;font-size:8.80px;line-height:10.12px;color:#101030;transform:scaleX(0.920);transform-origin:0 50%;">re-3</span>
<span style="left:53.00px;top:146.00px;font-size:8.80px;line-height:10.12px;color:#200c08;transform:scaleX(0.898);transform-origin:0 50%;">Design1</span>
<span style="left:120.60px;top:146.00px;font-size:8.80px;line-height:10.12px;color:#120818;transform:scaleX(0.912);transform-origin:0 50%;">papillon-v3-small</span>
<svg style="left:198.20px;top:145.20px" width="10.8" height="10.8" viewBox="0 0 10.8 10.8"><rect x="0.5" y="0.5" width="9.8" height="9.8" fill="#fff" stroke="#555" stroke-width="0.8"/><path d="M2.8 2.8L8 8M8 2.8L2.8 8" stroke="#111" stroke-width="1.5"/></svg>
<div style="left:0.00px;top:162.00px;width:547.00px;height:372.00px;background:#e9e9e9;"></div>
<div style="left:8.70px;top:166.60px;width:521.30px;height:11.40px;background:#fafafa;"></div>
<div style="left:0.00px;top:166.60px;width:6.60px;height:11.40px;background:#fafafa;"></div>
<span style="left:-5.19px;top:168.00px;font-size:8.80px;line-height:10.12px;color:#444;transform:scaleX(0.920);transform-origin:0 50%;">cm</span>
<div style="left:0.00px;top:183.00px;width:6.60px;height:330.00px;background:#fafafa;"></div>
<div style="left:6.60px;top:178.20px;width:524.00px;height:11.00px;background:#e6e6e6;"></div>
<div style="left:17.20px;top:189.00px;width:504.50px;height:322.00px;background:#808080;"></div>
<div style="left:10.00px;top:511.00px;width:78.00px;height:7.40px;background:#e0e0e0;"></div>
<svg style="left:8.70px;top:167.00px" width="521.3" height="11.2" viewBox="8.7 0 521.3 11.2"><text transform="translate(13.80 7.4) scale(0.92 1)" font-size="7.6" fill="#e8202a" text-anchor="middle" font-family="Liberation Sans, sans-serif">8</text><path d="M13.50 8.6V11.2" stroke="#e8202a" stroke-width="1"/><path d="M25.50 7.2V11.2" stroke="#e8202a" stroke-width="1"/><text transform="translate(38.10 7.4) scale(0.92 1)" font-size="7.6" fill="#e8202a" text-anchor="middle" font-family="Liberation Sans, sans-serif">7</text><path d="M38.50 8.6V11.2" stroke="#e8202a" stroke-width="1"/><path d="M50.50 7.2V11.2" stroke="#e8202a" stroke-width="1"/><text transform="translate(62.40 7.4) scale(0.92 1)" font-size="7.6" fill="#e8202a" text-anchor="middle" font-family="Liberation Sans, sans-serif">6</text><path d="M62.50 8.6V11.2" stroke="#e8202a" stroke-width="1"/><path d="M74.50 7.2V11.2" stroke="#e8202a" stroke-width="1"/><text transform="translate(86.70 7.4) scale(0.92 1)" font-size="7.6" fill="#e8202a" text-anchor="middle" font-family="Liberation Sans, sans-serif">5</text><path d="M86.50 8.6V11.2" stroke="#e8202a" stroke-width="1"/><path d="M98.50 7.2V11.2" stroke="#e8202a" stroke-width="1"/><text transform="translate(111.00 7.4) scale(0.92 1)" font-size="7.6" fill="#e8202a" text-anchor="middle" font-family="Liberation Sans, sans-serif">4</text><path d="M110.50 8.6V11.2" stroke="#e8202a" stroke-width="1"/><path d="M123.50 7.2V11.2" stroke="#e8202a" stroke-width="1"/><text transform="translate(135.30 7.4) scale(0.92 1)" font-size="7.6" fill="#e8202a" text-anchor="middle" font-family="Liberation Sans, sans-serif">3</text><path d="M135.50 8.6V11.2" stroke="#e8202a" stroke-width="1"/><path d="M147.50 7.2V11.2" stroke="#e8202a" stroke-width="1"/><text transform="translate(159.60 7.4) scale(0.92 1)" font-size="7.6" fill="#e8202a" text-anchor="middle" font-family="Liberation Sans, sans-serif">2</text><path d="M159.50 8.6V11.2" stroke="#e8202a" stroke-width="1"/><path d="M171.50 7.2V11.2" stroke="#e8202a" stroke-width="1"/><text transform="translate(183.90 7.4) scale(0.92 1)" font-size="7.6" fill="#e8202a" text-anchor="middle" font-family="Liberation Sans, sans-serif">1</text><path d="M183.50 8.6V11.2" stroke="#e8202a" stroke-width="1"/><path d="M196.50 7.2V11.2" stroke="#e8202a" stroke-width="1"/><text transform="translate(208.20 7.4) scale(0.92 1)" font-size="7.6" fill="#222" text-anchor="middle" font-family="Liberation Sans, sans-serif">0</text><path d="M208.50 8.6V11.2" stroke="#222" stroke-width="1"/><path d="M220.50 7.2V11.2" stroke="#222" stroke-width="1"/><text transform="translate(232.50 7.4) scale(0.92 1)" font-size="7.6" fill="#222" text-anchor="middle" font-family="Liberation Sans, sans-serif">1</text><path d="M232.50 8.6V11.2" stroke="#222" stroke-width="1"/><path d="M244.50 7.2V11.2" stroke="#222" stroke-width="1"/><text transform="translate(256.80 7.4) scale(0.92 1)" font-size="7.6" fill="#222" text-anchor="middle" font-family="Liberation Sans, sans-serif">2</text><path d="M256.50 8.6V11.2" stroke="#222" stroke-width="1"/><path d="M268.50 7.2V11.2" stroke="#222" stroke-width="1"/><text transform="translate(281.10 7.4) scale(0.92 1)" font-size="7.6" fill="#222" text-anchor="middle" font-family="Liberation Sans, sans-serif">3</text><path d="M281.50 8.6V11.2" stroke="#222" stroke-width="1"/><path d="M293.50 7.2V11.2" stroke="#222" stroke-width="1"/><text transform="translate(305.40 7.4) scale(0.92 1)" font-size="7.6" fill="#222" text-anchor="middle" font-family="Liberation Sans, sans-serif">4</text><path d="M305.50 8.6V11.2" stroke="#222" stroke-width="1"/><path d="M317.50 7.2V11.2" stroke="#222" stroke-width="1"/><text transform="translate(329.70 7.4) scale(0.92 1)" font-size="7.6" fill="#222" text-anchor="middle" font-family="Liberation Sans, sans-serif">5</text><path d="M329.50 8.6V11.2" stroke="#222" stroke-width="1"/><path d="M341.50 7.2V11.2" stroke="#222" stroke-width="1"/><text transform="translate(354.00 7.4) scale(0.92 1)" font-size="7.6" fill="#222" text-anchor="middle" font-family="Liberation Sans, sans-serif">6</text><path d="M354.50 8.6V11.2" stroke="#222" stroke-width="1"/><path d="M366.50 7.2V11.2" stroke="#222" stroke-width="1"/><text transform="translate(378.30 7.4) scale(0.92 1)" font-size="7.6" fill="#222" text-anchor="middle" font-family="Liberation Sans, sans-serif">7</text><path d="M378.50 8.6V11.2" stroke="#222" stroke-width="1"/><path d="M390.50 7.2V11.2" stroke="#222" stroke-width="1"/><text transform="translate(402.60 7.4) scale(0.92 1)" font-size="7.6" fill="#222" text-anchor="middle" font-family="Liberation Sans, sans-serif">8</text><path d="M402.50 8.6V11.2" stroke="#222" stroke-width="1"/><path d="M414.50 7.2V11.2" stroke="#222" stroke-width="1"/><text transform="translate(426.90 7.4) scale(0.92 1)" font-size="7.6" fill="#222" text-anchor="middle" font-family="Liberation Sans, sans-serif">9</text><path d="M426.50 8.6V11.2" stroke="#222" stroke-width="1"/><path d="M439.50 7.2V11.2" stroke="#222" stroke-width="1"/><text transform="translate(451.20 7.4) scale(0.92 1)" font-size="7.6" fill="#222" text-anchor="middle" font-family="Liberation Sans, sans-serif">10</text><path d="M451.50 8.6V11.2" stroke="#222" stroke-width="1"/><path d="M463.50 7.2V11.2" stroke="#222" stroke-width="1"/><text transform="translate(475.50 7.4) scale(0.92 1)" font-size="7.6" fill="#222" text-anchor="middle" font-family="Liberation Sans, sans-serif">11</text><path d="M475.50 8.6V11.2" stroke="#222" stroke-width="1"/><path d="M487.50 7.2V11.2" stroke="#222" stroke-width="1"/><text transform="translate(499.80 7.4) scale(0.92 1)" font-size="7.6" fill="#222" text-anchor="middle" font-family="Liberation Sans, sans-serif">12</text><path d="M499.50 8.6V11.2" stroke="#222" stroke-width="1"/><path d="M511.50 7.2V11.2" stroke="#222" stroke-width="1"/><text transform="translate(524.10 7.4) scale(0.92 1)" font-size="7.6" fill="#222" text-anchor="middle" font-family="Liberation Sans, sans-serif">13</text><path d="M524.50 8.6V11.2" stroke="#222" stroke-width="1"/></svg>
<div style="left:451.40px;top:163.00px;width:1.00px;height:2.40px;background:#444;"></div>
<div style="left:451.40px;top:177.00px;width:1.00px;height:2.60px;background:#444;"></div>
<svg style="left:0.00px;top:0.00px" width="547" height="520" viewBox="0 0 547 520"><rect x="37.60" y="197.20" width="1" height="1" fill="#5e5e5e"/><rect x="37.60" y="221.65" width="1" height="1" fill="#5e5e5e"/><rect x="37.60" y="246.10" width="1" height="1" fill="#5e5e5e"/><rect x="37.60" y="270.55" width="1" height="1" fill="#5e5e5e"/><rect x="37.60" y="295.00" width="1" height="1" fill="#5e5e5e"/><rect x="37.60" y="319.45" width="1" height="1" fill="#5e5e5e"/><rect x="37.60" y="343.90" width="1" height="1" fill="#5e5e5e"/><rect x="37.60" y="368.35" width="1" height="1" fill="#5e5e5e"/><rect x="37.60" y="392.80" width="1" height="1" fill="#5e5e5e"/><rect x="37.60" y="417.25" width="1" height="1" fill="#5e5e5e"/><rect x="37.60" y="441.70" width="1" height="1" fill="#5e5e5e"/><rect x="37.60" y="466.15" width="1" height="1" fill="#5e5e5e"/><rect x="37.60" y="490.60" width="1" height="1" fill="#5e5e5e"/><rect x="61.90" y="197.20" width="1" height="1" fill="#5e5e5e"/><rect x="61.90" y="221.65" width="1" height="1" fill="#5e5e5e"/><rect x="61.90" y="246.10" width="1" height="1" fill="#5e5e5e"/><rect x="61.90" y="270.55" width="1" height="1" fill="#5e5e5e"/><rect x="61.90" y="295.00" width="1" height="1" fill="#5e5e5e"/><rect x="61.90" y="319.45" width="1" height="1" fill="#5e5e5e"/><rect x="61.90" y="343.90" width="1" height="1" fill="#5e5e5e"/><rect x="61.90" y="368.35" width="1" height="1" fill="#5e5e5e"/><rect x="61.90" y="392.80" width="1" height="1" fill="#5e5e5e"/><rect x="61.90" y="417.25" width="1" height="1" fill="#5e5e5e"/><rect x="61.90" y="441.70" width="1" height="1" fill="#5e5e5e"/><rect x="61.90" y="466.15" width="1" height="1" fill="#5e5e5e"/><rect x="61.90" y="490.60" width="1" height="1" fill="#5e5e5e"/><rect x="86.20" y="197.20" width="1" height="1" fill="#5e5e5e"/><rect x="86.20" y="221.65" width="1" height="1" fill="#5e5e5e"/><rect x="86.20" y="246.10" width="1" height="1" fill="#5e5e5e"/><rect x="86.20" y="270.55" width="1" height="1" fill="#5e5e5e"/><rect x="86.20" y="295.00" width="1" height="1" fill="#5e5e5e"/><rect x="86.20" y="319.45" width="1" height="1" fill="#5e5e5e"/><rect x="86.20" y="343.90" width="1" height="1" fill="#5e5e5e"/><rect x="86.20" y="368.35" width="1" height="1" fill="#5e5e5e"/><rect x="86.20" y="392.80" width="1" height="1" fill="#5e5e5e"/><rect x="86.20" y="417.25" width="1" height="1" fill="#5e5e5e"/><rect x="86.20" y="441.70" width="1" height="1" fill="#5e5e5e"/><rect x="86.20" y="466.15" width="1" height="1" fill="#5e5e5e"/><rect x="86.20" y="490.60" width="1" height="1" fill="#5e5e5e"/><rect x="110.50" y="197.20" width="1" height="1" fill="#5e5e5e"/><rect x="110.50" y="221.65" width="1" height="1" fill="#5e5e5e"/><rect x="110.50" y="246.10" width="1" height="1" fill="#5e5e5e"/><rect x="110.50" y="270.55" width="1" height="1" fill="#5e5e5e"/><rect x="110.50" y="295.00" width="1" height="1" fill="#5e5e5e"/><rect x="110.50" y="319.45" width="1" height="1" fill="#5e5e5e"/><rect x="110.50" y="343.90" width="1" height="1" fill="#5e5e5e"/><rect x="110.50" y="368.35" width="1" height="1" fill="#5e5e5e"/><rect x="110.50" y="392.80" width="1" height="1" fill="#5e5e5e"/><rect x="110.50" y="417.25" width="1" height="1" fill="#5e5e5e"/><rect x="110.50" y="441.70" width="1" height="1" fill="#5e5e5e"/><rect x="110.50" y="466.15" width="1" height="1" fill="#5e5e5e"/><rect x="110.50" y="490.60" width="1" height="1" fill="#5e5e5e"/><rect x="134.80" y="197.20" width="1" height="1" fill="#5e5e5e"/><rect x="134.80" y="221.65" width="1" height="1" fill="#5e5e5e"/><rect x="134.80" y="246.10" width="1" height="1" fill="#5e5e5e"/><rect x="134.80" y="270.55" width="1" height="1" fill="#5e5e5e"/><rect x="134.80" y="295.00" width="1" height="1" fill="#5e5e5e"/><rect x="134.80" y="319.45" width="1" height="1" fill="#5e5e5e"/><rect x="134.80" y="343.90" width="1" height="1" fill="#5e5e5e"/><rect x="134.80" y="368.35" width="1" height="1" fill="#5e5e5e"/><rect x="134.80" y="392.80" width="1" height="1" fill="#5e5e5e"/><rect x="134.80" y="417.25" width="1" height="1" fill="#5e5e5e"/><rect x="134.80" y="441.70" width="1" height="1" fill="#5e5e5e"/><rect x="134.80" y="466.15" width="1" height="1" fill="#5e5e5e"/><rect x="134.80" y="490.60" width="1" height="1" fill="#5e5e5e"/><rect x="159.10" y="197.20" width="1" height="1" fill="#5e5e5e"/><rect x="159.10" y="221.65" width="1" height="1" fill="#5e5e5e"/><rect x="159.10" y="246.10" width="1" height="1" fill="#5e5e5e"/><rect x="159.10" y="270.55" width="1" height="1" fill="#5e5e5e"/><rect x="159.10" y="295.00" width="1" height="1" fill="#5e5e5e"/><rect x="159.10" y="319.45" width="1" height="1" fill="#5e5e5e"/><rect x="159.10" y="343.90" width="1" height="1" fill="#5e5e5e"/><rect x="159.10" y="368.35" width="1" height="1" fill="#5e5e5e"/><rect x="159.10" y="392.80" width="1" height="1" fill="#5e5e5e"/><rect x="159.10" y="417.25" width="1" height="1" fill="#5e5e5e"/><rect x="159.10" y="441.70" width="1" height="1" fill="#5e5e5e"/><rect x="159.10" y="466.15" width="1" height="1" fill="#5e5e5e"/><rect x="159.10" y="490.60" width="1" height="1" fill="#5e5e5e"/><rect x="183.40" y="197.20" width="1" height="1" fill="#5e5e5e"/><rect x="183.40" y="221.65" width="1" height="1" fill="#5e5e5e"/><rect x="183.40" y="246.10" width="1" height="1" fill="#5e5e5e"/><rect x="183.40" y="270.55" width="1" height="1" fill="#5e5e5e"/><rect x="183.40" y="295.00" width="1" height="1" fill="#5e5e5e"/><rect x="183.40" y="319.45" width="1" height="1" fill="#5e5e5e"/><rect x="183.40" y="343.90" width="1" height="1" fill="#5e5e5e"/><rect x="183.40" y="368.35" width="1" height="1" fill="#5e5e5e"/><rect x="183.40" y="392.80" width="1" height="1" fill="#5e5e5e"/><rect x="183.40" y="417.25" width="1" height="1" fill="#5e5e5e"/><rect x="183.40" y="441.70" width="1" height="1" fill="#5e5e5e"/><rect x="183.40" y="466.15" width="1" height="1" fill="#5e5e5e"/><rect x="183.40" y="490.60" width="1" height="1" fill="#5e5e5e"/><rect x="207.70" y="197.20" width="1" height="1" fill="#5e5e5e"/><rect x="207.70" y="221.65" width="1" height="1" fill="#5e5e5e"/><rect x="207.70" y="246.10" width="1" height="1" fill="#5e5e5e"/><rect x="207.70" y="270.55" width="1" height="1" fill="#5e5e5e"/><rect x="207.70" y="295.00" width="1" height="1" fill="#5e5e5e"/><rect x="207.70" y="319.45" width="1" height="1" fill="#5e5e5e"/><rect x="207.70" y="343.90" width="1" height="1" fill="#5e5e5e"/><rect x="207.70" y="368.35" width="1" height="1" fill="#5e5e5e"/><rect x="207.70" y="392.80" width="1" height="1" fill="#5e5e5e"/><rect x="207.70" y="417.25" width="1" height="1" fill="#5e5e5e"/><rect x="207.70" y="441.70" width="1" height="1" fill="#5e5e5e"/><rect x="207.70" y="466.15" width="1" height="1" fill="#5e5e5e"/><rect x="207.70" y="490.60" width="1" height="1" fill="#5e5e5e"/><rect x="232.00" y="197.20" width="1" height="1" fill="#5e5e5e"/><rect x="232.00" y="221.65" width="1" height="1" fill="#5e5e5e"/><rect x="232.00" y="246.10" width="1" height="1" fill="#5e5e5e"/><rect x="232.00" y="270.55" width="1" height="1" fill="#5e5e5e"/><rect x="232.00" y="295.00" width="1" height="1" fill="#5e5e5e"/><rect x="232.00" y="319.45" width="1" height="1" fill="#5e5e5e"/><rect x="232.00" y="343.90" width="1" height="1" fill="#5e5e5e"/><rect x="232.00" y="368.35" width="1" height="1" fill="#5e5e5e"/><rect x="232.00" y="392.80" width="1" height="1" fill="#5e5e5e"/><rect x="232.00" y="417.25" width="1" height="1" fill="#5e5e5e"/><rect x="232.00" y="441.70" width="1" height="1" fill="#5e5e5e"/><rect x="232.00" y="466.15" width="1" height="1" fill="#5e5e5e"/><rect x="232.00" y="490.60" width="1" height="1" fill="#5e5e5e"/><rect x="256.30" y="197.20" width="1" height="1" fill="#5e5e5e"/><rect x="256.30" y="221.65" width="1" height="1" fill="#5e5e5e"/><rect x="256.30" y="246.10" width="1" height="1" fill="#5e5e5e"/><rect x="256.30" y="270.55" width="1" height="1" fill="#5e5e5e"/><rect x="256.30" y="295.00" width="1" height="1" fill="#5e5e5e"/><rect x="256.30" y="319.45" width="1" height="1" fill="#5e5e5e"/><rect x="256.30" y="343.90" width="1" height="1" fill="#5e5e5e"/><rect x="256.30" y="368.35" width="1" height="1" fill="#5e5e5e"/><rect x="256.30" y="392.80" width="1" height="1" fill="#5e5e5e"/><rect x="256.30" y="417.25" width="1" height="1" fill="#5e5e5e"/><rect x="256.30" y="441.70" width="1" height="1" fill="#5e5e5e"/><rect x="256.30" y="466.15" width="1" height="1" fill="#5e5e5e"/><rect x="256.30" y="490.60" width="1" height="1" fill="#5e5e5e"/><rect x="280.60" y="197.20" width="1" height="1" fill="#5e5e5e"/><rect x="280.60" y="221.65" width="1" height="1" fill="#5e5e5e"/><rect x="280.60" y="246.10" width="1" height="1" fill="#5e5e5e"/><rect x="280.60" y="270.55" width="1" height="1" fill="#5e5e5e"/><rect x="280.60" y="295.00" width="1" height="1" fill="#5e5e5e"/><rect x="280.60" y="319.45" width="1" height="1" fill="#5e5e5e"/><rect x="280.60" y="343.90" width="1" height="1" fill="#5e5e5e"/><rect x="280.60" y="368.35" width="1" height="1" fill="#5e5e5e"/><rect x="280.60" y="392.80" width="1" height="1" fill="#5e5e5e"/><rect x="280.60" y="417.25" width="1" height="1" fill="#5e5e5e"/><rect x="280.60" y="441.70" width="1" height="1" fill="#5e5e5e"/><rect x="280.60" y="466.15" width="1" height="1" fill="#5e5e5e"/><rect x="280.60" y="490.60" width="1" height="1" fill="#5e5e5e"/><rect x="304.90" y="197.20" width="1" height="1" fill="#5e5e5e"/><rect x="304.90" y="221.65" width="1" height="1" fill="#5e5e5e"/><rect x="304.90" y="246.10" width="1" height="1" fill="#5e5e5e"/><rect x="304.90" y="270.55" width="1" height="1" fill="#5e5e5e"/><rect x="304.90" y="295.00" width="1" height="1" fill="#5e5e5e"/><rect x="304.90" y="319.45" width="1" height="1" fill="#5e5e5e"/><rect x="304.90" y="343.90" width="1" height="1" fill="#5e5e5e"/><rect x="304.90" y="368.35" width="1" height="1" fill="#5e5e5e"/><rect x="304.90" y="392.80" width="1" height="1" fill="#5e5e5e"/><rect x="304.90" y="417.25" width="1" height="1" fill="#5e5e5e"/><rect x="304.90" y="441.70" width="1" height="1" fill="#5e5e5e"/><rect x="304.90" y="466.15" width="1" height="1" fill="#5e5e5e"/><rect x="304.90" y="490.60" width="1" height="1" fill="#5e5e5e"/><rect x="329.20" y="197.20" width="1" height="1" fill="#5e5e5e"/><rect x="329.20" y="221.65" width="1" height="1" fill="#5e5e5e"/><rect x="329.20" y="246.10" width="1" height="1" fill="#5e5e5e"/><rect x="329.20" y="270.55" width="1" height="1" fill="#5e5e5e"/><rect x="329.20" y="295.00" width="1" height="1" fill="#5e5e5e"/><rect x="329.20" y="319.45" width="1" height="1" fill="#5e5e5e"/><rect x="329.20" y="343.90" width="1" height="1" fill="#5e5e5e"/><rect x="329.20" y="368.35" width="1" height="1" fill="#5e5e5e"/><rect x="329.20" y="392.80" width="1" height="1" fill="#5e5e5e"/><rect x="329.20" y="417.25" width="1" height="1" fill="#5e5e5e"/><rect x="329.20" y="441.70" width="1" height="1" fill="#5e5e5e"/><rect x="329.20" y="466.15" width="1" height="1" fill="#5e5e5e"/><rect x="329.20" y="490.60" width="1" height="1" fill="#5e5e5e"/><rect x="353.50" y="197.20" width="1" height="1" fill="#5e5e5e"/><rect x="353.50" y="221.65" width="1" height="1" fill="#5e5e5e"/><rect x="353.50" y="246.10" width="1" height="1" fill="#5e5e5e"/><rect x="353.50" y="270.55" width="1" height="1" fill="#5e5e5e"/><rect x="353.50" y="295.00" width="1" height="1" fill="#5e5e5e"/><rect x="353.50" y="319.45" width="1" height="1" fill="#5e5e5e"/><rect x="353.50" y="343.90" width="1" height="1" fill="#5e5e5e"/><rect x="353.50" y="368.35" width="1" height="1" fill="#5e5e5e"/><rect x="353.50" y="392.80" width="1" height="1" fill="#5e5e5e"/><rect x="353.50" y="417.25" width="1" height="1" fill="#5e5e5e"/><rect x="353.50" y="441.70" width="1" height="1" fill="#5e5e5e"/><rect x="353.50" y="466.15" width="1" height="1" fill="#5e5e5e"/><rect x="353.50" y="490.60" width="1" height="1" fill="#5e5e5e"/><rect x="377.80" y="197.20" width="1" height="1" fill="#5e5e5e"/><rect x="377.80" y="221.65" width="1" height="1" fill="#5e5e5e"/><rect x="377.80" y="246.10" width="1" height="1" fill="#5e5e5e"/><rect x="377.80" y="270.55" width="1" height="1" fill="#5e5e5e"/><rect x="377.80" y="295.00" width="1" height="1" fill="#5e5e5e"/><rect x="377.80" y="319.45" width="1" height="1" fill="#5e5e5e"/><rect x="377.80" y="343.90" width="1" height="1" fill="#5e5e5e"/><rect x="377.80" y="368.35" width="1" height="1" fill="#5e5e5e"/><rect x="377.80" y="392.80" width="1" height="1" fill="#5e5e5e"/><rect x="377.80" y="417.25" width="1" height="1" fill="#5e5e5e"/><rect x="377.80" y="441.70" width="1" height="1" fill="#5e5e5e"/><rect x="377.80" y="466.15" width="1" height="1" fill="#5e5e5e"/><rect x="377.80" y="490.60" width="1" height="1" fill="#5e5e5e"/><rect x="402.10" y="197.20" width="1" height="1" fill="#5e5e5e"/><rect x="402.10" y="221.65" width="1" height="1" fill="#5e5e5e"/><rect x="402.10" y="246.10" width="1" height="1" fill="#5e5e5e"/><rect x="402.10" y="270.55" width="1" height="1" fill="#5e5e5e"/><rect x="402.10" y="295.00" width="1" height="1" fill="#5e5e5e"/><rect x="402.10" y="319.45" width="1" height="1" fill="#5e5e5e"/><rect x="402.10" y="343.90" width="1" height="1" fill="#5e5e5e"/><rect x="402.10" y="368.35" width="1" height="1" fill="#5e5e5e"/><rect x="402.10" y="392.80" width="1" height="1" fill="#5e5e5e"/><rect x="402.10" y="417.25" width="1" height="1" fill="#5e5e5e"/><rect x="402.10" y="441.70" width="1" height="1" fill="#5e5e5e"/><rect x="402.10" y="466.15" width="1" height="1" fill="#5e5e5e"/><rect x="402.10" y="490.60" width="1" height="1" fill="#5e5e5e"/><rect x="426.40" y="197.20" width="1" height="1" fill="#5e5e5e"/><rect x="426.40" y="221.65" width="1" height="1" fill="#5e5e5e"/><rect x="426.40" y="246.10" width="1" height="1" fill="#5e5e5e"/><rect x="426.40" y="270.55" width="1" height="1" fill="#5e5e5e"/><rect x="426.40" y="295.00" width="1" height="1" fill="#5e5e5e"/><rect x="426.40" y="319.45" width="1" height="1" fill="#5e5e5e"/><rect x="426.40" y="343.90" width="1" height="1" fill="#5e5e5e"/><rect x="426.40" y="368.35" width="1" height="1" fill="#5e5e5e"/><rect x="426.40" y="392.80" width="1" height="1" fill="#5e5e5e"/><rect x="426.40" y="417.25" width="1" height="1" fill="#5e5e5e"/><rect x="426.40" y="441.70" width="1" height="1" fill="#5e5e5e"/><rect x="426.40" y="466.15" width="1" height="1" fill="#5e5e5e"/><rect x="426.40" y="490.60" width="1" height="1" fill="#5e5e5e"/><rect x="450.70" y="197.20" width="1" height="1" fill="#5e5e5e"/><rect x="450.70" y="221.65" width="1" height="1" fill="#5e5e5e"/><rect x="450.70" y="246.10" width="1" height="1" fill="#5e5e5e"/><rect x="450.70" y="270.55" width="1" height="1" fill="#5e5e5e"/><rect x="450.70" y="295.00" width="1" height="1" fill="#5e5e5e"/><rect x="450.70" y="319.45" width="1" height="1" fill="#5e5e5e"/><rect x="450.70" y="343.90" width="1" height="1" fill="#5e5e5e"/><rect x="450.70" y="368.35" width="1" height="1" fill="#5e5e5e"/><rect x="450.70" y="392.80" width="1" height="1" fill="#5e5e5e"/><rect x="450.70" y="417.25" width="1" height="1" fill="#5e5e5e"/><rect x="450.70" y="441.70" width="1" height="1" fill="#5e5e5e"/><rect x="450.70" y="466.15" width="1" height="1" fill="#5e5e5e"/><rect x="450.70" y="490.60" width="1" height="1" fill="#5e5e5e"/><rect x="475.00" y="197.20" width="1" height="1" fill="#5e5e5e"/><rect x="475.00" y="221.65" width="1" height="1" fill="#5e5e5e"/><rect x="475.00" y="246.10" width="1" height="1" fill="#5e5e5e"/><rect x="475.00" y="270.55" width="1" height="1" fill="#5e5e5e"/><rect x="475.00" y="295.00" width="1" height="1" fill="#5e5e5e"/><rect x="475.00" y="319.45" width="1" height="1" fill="#5e5e5e"/><rect x="475.00" y="343.90" width="1" height="1" fill="#5e5e5e"/><rect x="475.00" y="368.35" width="1" height="1" fill="#5e5e5e"/><rect x="475.00" y="392.80" width="1" height="1" fill="#5e5e5e"/><rect x="475.00" y="417.25" width="1" height="1" fill="#5e5e5e"/><rect x="475.00" y="441.70" width="1" height="1" fill="#5e5e5e"/><rect x="475.00" y="466.15" width="1" height="1" fill="#5e5e5e"/><rect x="475.00" y="490.60" width="1" height="1" fill="#5e5e5e"/><rect x="499.30" y="197.20" width="1" height="1" fill="#5e5e5e"/><rect x="499.30" y="221.65" width="1" height="1" fill="#5e5e5e"/><rect x="499.30" y="246.10" width="1" height="1" fill="#5e5e5e"/><rect x="499.30" y="270.55" width="1" height="1" fill="#5e5e5e"/><rect x="499.30" y="295.00" width="1" height="1" fill="#5e5e5e"/><rect x="499.30" y="319.45" width="1" height="1" fill="#5e5e5e"/><rect x="499.30" y="343.90" width="1" height="1" fill="#5e5e5e"/><rect x="499.30" y="368.35" width="1" height="1" fill="#5e5e5e"/><rect x="499.30" y="392.80" width="1" height="1" fill="#5e5e5e"/><rect x="499.30" y="417.25" width="1" height="1" fill="#5e5e5e"/><rect x="499.30" y="441.70" width="1" height="1" fill="#5e5e5e"/><rect x="499.30" y="466.15" width="1" height="1" fill="#5e5e5e"/><rect x="499.30" y="490.60" width="1" height="1" fill="#5e5e5e"/></svg>
<div style="left:86.00px;top:367.80px;width:50.00px;height:143.20px;background:#fff;border-left:1px solid #2f8f3a;border-top:1px solid #2f8f3a;"></div>
<svg style="left:0.00px;top:0.00px" width="140" height="520" viewBox="0 0 140 520"><rect x="110.50" y="392.80" width="1" height="1" fill="#a8a8a8"/><rect x="110.50" y="417.25" width="1" height="1" fill="#a8a8a8"/><rect x="110.50" y="441.70" width="1" height="1" fill="#a8a8a8"/><rect x="110.50" y="466.15" width="1" height="1" fill="#a8a8a8"/><rect x="110.50" y="490.60" width="1" height="1" fill="#a8a8a8"/><rect x="110.50" y="515.05" width="1" height="1" fill="#a8a8a8"/></svg>
<svg style="left:0.00px;top:183.00px" width="6.6" height="330" viewBox="0 183 6.6 330"><path d="M2.8 185.38H6.6" stroke="#222" stroke-width="0.9"/><path d="M2.8 197.60H6.6" stroke="#222" stroke-width="0.9"/><text transform="translate(2.6 197.60) rotate(-90)" font-size="7.4" fill="#222" text-anchor="middle" font-family="Liberation Sans, sans-serif">12</text><path d="M2.8 209.82H6.6" stroke="#222" stroke-width="0.9"/><path d="M2.8 222.05H6.6" stroke="#222" stroke-width="0.9"/><text transform="translate(2.6 222.05) rotate(-90)" font-size="7.4" fill="#222" text-anchor="middle" font-family="Liberation Sans, sans-serif">11</text><path d="M2.8 234.27H6.6" stroke="#222" stroke-width="0.9"/><path d="M2.8 246.50H6.6" stroke="#222" stroke-width="0.9"/><text transform="translate(2.6 246.50) rotate(-90)" font-size="7.4" fill="#222" text-anchor="middle" font-family="Liberation Sans, sans-serif">10</text><path d="M2.8 258.73H6.6" stroke="#222" stroke-width="0.9"/><path d="M2.8 270.95H6.6" stroke="#222" stroke-width="0.9"/><text transform="translate(2.6 270.95) rotate(-90)" font-size="7.4" fill="#222" text-anchor="middle" font-family="Liberation Sans, sans-serif">9</text><path d="M2.8 283.18H6.6" stroke="#222" stroke-width="0.9"/><path d="M2.8 295.40H6.6" stroke="#222" stroke-width="0.9"/><text transform="translate(2.6 295.40) rotate(-90)" font-size="7.4" fill="#222" text-anchor="middle" font-family="Liberation Sans, sans-serif">8</text><path d="M2.8 307.62H6.6" stroke="#222" stroke-width="0.9"/><path d="M2.8 319.85H6.6" stroke="#222" stroke-width="0.9"/><text transform="translate(2.6 319.85) rotate(-90)" font-size="7.4" fill="#222" text-anchor="middle" font-family="Liberation Sans, sans-serif">7</text><path d="M2.8 332.07H6.6" stroke="#222" stroke-width="0.9"/><path d="M2.8 344.30H6.6" stroke="#222" stroke-width="0.9"/><text transform="translate(2.6 344.30) rotate(-90)" font-size="7.4" fill="#222" text-anchor="middle" font-family="Liberation Sans, sans-serif">6</text><path d="M2.8 356.52H6.6" stroke="#222" stroke-width="0.9"/><path d="M2.8 368.75H6.6" stroke="#222" stroke-width="0.9"/><text transform="translate(2.6 368.75) rotate(-90)" font-size="7.4" fill="#222" text-anchor="middle" font-family="Liberation Sans, sans-serif">5</text><path d="M2.8 380.98H6.6" stroke="#222" stroke-width="0.9"/><path d="M2.8 393.20H6.6" stroke="#222" stroke-width="0.9"/><text transform="translate(2.6 393.20) rotate(-90)" font-size="7.4" fill="#222" text-anchor="middle" font-family="Liberation Sans, sans-serif">4</text><path d="M2.8 405.42H6.6" stroke="#222" stroke-width="0.9"/><path d="M2.8 417.65H6.6" stroke="#222" stroke-width="0.9"/><text transform="translate(2.6 417.65) rotate(-90)" font-size="7.4" fill="#222" text-anchor="middle" font-family="Liberation Sans, sans-serif">3</text><path d="M2.8 429.88H6.6" stroke="#222" stroke-width="0.9"/><path d="M2.8 442.10H6.6" stroke="#222" stroke-width="0.9"/><text transform="translate(2.6 442.10) rotate(-90)" font-size="7.4" fill="#222" text-anchor="middle" font-family="Liberation Sans, sans-serif">2</text><path d="M2.8 454.32H6.6" stroke="#222" stroke-width="0.9"/><path d="M2.8 466.55H6.6" stroke="#222" stroke-width="0.9"/><text transform="translate(2.6 466.55) rotate(-90)" font-size="7.4" fill="#222" text-anchor="middle" font-family="Liberation Sans, sans-serif">1</text><path d="M2.8 478.77H6.6" stroke="#222" stroke-width="0.9"/><path d="M2.8 491.00H6.6" stroke="#222" stroke-width="0.9"/><text transform="translate(2.6 491.00) rotate(-90)" font-size="7.4" fill="#222" text-anchor="middle" font-family="Liberation Sans, sans-serif">0</text><path d="M2.8 503.23H6.6" stroke="#e8202a" stroke-width="0.9"/><path d="M5 214H7" stroke="#222" stroke-width="0.9"/></svg>
<div style="left:530.00px;top:183.00px;width:12.60px;height:330.00px;background:#f1f1f1;"></div>
<svg style="left:531.60px;top:186.00px" width="7" height="5" viewBox="0 0 7 5"><path d="M0.6 4 L3.5 1 L6.4 4" fill="none" stroke="#444" stroke-width="1.2"/></svg>
<div style="left:0.00px;top:519.00px;width:9.60px;height:13.00px;background:#dcdcdc;"></div>
<div style="left:9.60px;top:519.00px;width:540.00px;height:13.00px;background:#f1f1f1;"></div>
<svg style="left:13.40px;top:522.00px" width="5" height="7" viewBox="0 0 5 7"><path d="M4 0.6 L1 3.5 L4 6.4" fill="none" stroke="#444" stroke-width="1.3"/></svg>
<div style="left:0.00px;top:532.60px;width:547.00px;height:1.00px;background:#d2d2d2;"></div>
<svg style="left:190.00px;top:178.00px" width="200" height="45" viewBox="190 178 200 45"><defs><clipPath id="bc"><rect x="190" y="188.6" width="200" height="33.6"/></clipPath><clipPath id="bt"><rect x="190" y="178.2" width="200" height="10.4"/></clipPath></defs>
<g clip-path="url(#bt)" opacity="0.55">
<path d="M222 176 Q224 184 226 189 H284 V176Z" fill="#efeedc"/>
<rect x="286" y="178" width="13" height="11" fill="#f1dede"/>
<path d="M299 176 V189 H359 Q361 184 363 176Z" fill="#dadada"/>
<circle cx="312" cy="180" r="5" fill="none" stroke="#eaf0ec" stroke-width="1"/><circle cx="338" cy="179" r="5" fill="none" stroke="#eaf0ec" stroke-width="1"/>
<path d="M216 176 Q218 184 220 189 M369 176 Q367 184 365 189" stroke="#f6f6f6" stroke-width="1.2" fill="none"/>
</g>
<g clip-path="url(#bc)">
<path d="M218.6 186 Q222 197 233 203.4 Q220 210 213.6 224 H286 V186Z" fill="#b9b9b9" stroke="#f2f2f2" stroke-width="1.3"/>
<path d="M364.2 186 Q360.6 197 352.2 203.4 Q362.6 210 370 224 H298 V186Z" fill="#a0a0a0" stroke="#f2f2f2" stroke-width="1.1"/>
<path d="M224.6 186 Q228 197 237 203.4 Q226 210 219.6 224 H284 V186Z" fill="#ffe000"/>
<path d="M362.6 186 Q359 197 350.8 203.4 Q361 210 368.4 224 H299.2 V186Z" fill="#262b28"/>
<rect x="284" y="186" width="15.2" height="38" fill="#e4e4e4"/>
<path d="M285.4 186V224M298.4 186V224" stroke="#fafafa" stroke-width="1"/>
<g fill="#e2202e"><rect x="285.8" y="189.4" width="11.8" height="4.6" rx="2.2"/><rect x="285.8" y="196.7" width="11.8" height="4.6" rx="2.2"/><rect x="285.8" y="204.5" width="11.8" height="4.6" rx="2.2"/><rect x="285.8" y="211.9" width="11.8" height="4.6" rx="2.2"/><rect x="285.8" y="219.2" width="11.8" height="4.6" rx="2.2"/></g>
<g fill="#fbfbfb"><rect x="286" y="194.6" width="11.4" height="1.6" rx="0.8"/><rect x="286" y="202.1" width="11.4" height="1.6" rx="0.8"/><rect x="286" y="209.7" width="11.4" height="1.6" rx="0.8"/><rect x="286" y="217.1" width="11.4" height="1.6" rx="0.8"/></g>
<circle cx="273.8" cy="199.8" r="4.6" fill="#262b28" stroke="#f4f4e6" stroke-width="1.2"/>
<circle cx="247.8" cy="218" r="5" fill="#3a3d3a" stroke="#f4f4e6" stroke-width="1"/><circle cx="247.8" cy="218" r="3" fill="none" stroke="#1c1f1c" stroke-width="1.8"/>
<circle cx="268.2" cy="221.6" r="8" fill="#232724" stroke="#f4f4e6" stroke-width="1.1"/>
<path d="M249.4 209.6 L251 206 M251.8 209 L252.6 207" stroke="#f6f2c0" stroke-width="0.8"/>
<circle cx="310.2" cy="199" r="4.6" fill="#1d8a52" stroke="#e6ece8" stroke-width="1.9"/>
<circle cx="343.8" cy="216.2" r="4.4" fill="#1d8a52" stroke="#dfe6e2" stroke-width="1.7"/>
<circle cx="316.6" cy="220.6" r="6.2" fill="#1d8a52" stroke="#dfe6e2" stroke-width="1.2"/>
<path d="M312.6 218.6 L316 217 L318.6 219 M314 221.6 L317.6 220.6" stroke="#e8f0ea" stroke-width="0.9" fill="none"/>
</g>
<g stroke="#d8d8d8" stroke-width="0.8"><path d="M199.6 207.1L203.4 210.9M203.4 207.1L199.6 210.9M201.5 206.5V211.5M199 209H204"/><path d="M382.1 207.4L385.9 211.2M385.9 207.4L382.1 211.2M384 206.8V211.8M381.5 209.3H386.5"/></g>
<path d="M384 178.4V188.4" stroke="#d2d2d2" stroke-width="0.8" stroke-dasharray="1 1"/><path d="M201.5 178.4V188.4" stroke="#d2d2d2" stroke-width="0.8" stroke-dasharray="1 1"/>
</svg>
<div style="left:0.00px;top:536.40px;width:140.00px;height:30.00px;background:#f5f5f5;border-top:1px solid #cfcfcf;border-bottom:1px solid #c8c8c8;"></div>
<span style="left:-3.40px;top:546.00px;font-size:8.80px;line-height:10.12px;color:#555;transform:scaleX(0.927);transform-origin:0 50%;">Messages</span>
<div style="left:0.00px;top:566.00px;width:140.00px;height:34.00px;background:#fff;"></div>
<svg style="left:-2.60px;top:568.60px" width="10" height="9.4" viewBox="0 0 10 9.4"><circle cx="4.8" cy="4.7" r="4.5" fill="#e8202a"/><path d="M2.6 2.5L7 6.9M7 2.5L2.6 6.9" stroke="#fff" stroke-width="1.5"/></svg>
<svg style="left:-2.60px;top:580.80px" width="10" height="9.4" viewBox="0 0 10 9.4"><circle cx="4.8" cy="4.7" r="4.5" fill="#e8202a"/><path d="M2.6 2.5L7 6.9M7 2.5L2.6 6.9" stroke="#fff" stroke-width="1.5"/></svg>
<span style="left:11.40px;top:568.00px;font-size:8.80px;line-height:10.12px;color:#222;transform:scaleX(0.919);transform-origin:0 50%;">Error: Invalid Main Reference. Section 14</span>
<span style="left:11.40px;top:580.00px;font-size:8.80px;line-height:10.12px;color:#222;transform:scaleX(0.897);transform-origin:0 50%;">Error: Missing Direction Line. Section 22</span>
<div style="left:549.00px;top:162.00px;width:140.00px;height:62.00px;background:#f5f5f5;border:1px solid #cbcbcb;"></div>
<span style="left:557.00px;top:172.00px;font-size:8.80px;line-height:10.12px;color:#555;transform:scaleX(0.918);transform-origin:0 50%;">Document Map</span>
<div style="left:550.00px;top:208.00px;width:140.00px;height:15.00px;background:#fff;"></div>
<div style="left:552.50px;top:193.20px;width:32.70px;height:14.60px;background:#ebebeb;border:1px solid #a8a8a8;border-top-color:#c8c8c8;border-left-color:#c8c8c8;box-shadow:inset 1px 1px 0 #fafafa;"></div>
<div style="left:584.60px;top:193.20px;width:32.80px;height:14.60px;background:#ebebeb;border:1px solid #a8a8a8;border-top-color:#c8c8c8;border-left-color:#c8c8c8;box-shadow:inset 1px 1px 0 #fafafa;"></div>
<div style="left:616.80px;top:193.20px;width:32.80px;height:14.60px;background:#ebebeb;border:1px solid #a8a8a8;border-top-color:#c8c8c8;border-left-color:#c8c8c8;box-shadow:inset 1px 1px 0 #fafafa;"></div>
<div style="left:649.00px;top:193.20px;width:32.80px;height:14.60px;background:#ebebeb;border:1px solid #a8a8a8;border-top-color:#c8c8c8;border-left-color:#c8c8c8;box-shadow:inset 1px 1px 0 #fafafa;"></div>
<div style="left:681.20px;top:190.60px;width:10.00px;height:17.40px;background:#f8f8f8;border:1px solid #b4b4b4;"></div>
<div style="left:685.60px;top:194.00px;width:3.00px;height:11.00px;background:#555;"></div>
<svg style="left:556.00px;top:194.60px" width="13" height="13" viewBox="0 0 13 13"><path d="M2.2 10.6 L3.4 7.6 L9.4 1.6 L11.4 3.6 L5.4 9.6Z" fill="#8a8a8a" stroke="#3c3c3c" stroke-width="0.8"/><path d="M4.6 8.6 L10.4 2.8" stroke="#555" stroke-width="0.7"/><path d="M1.2 11.8 L3 7.8 L5.2 10Z" fill="#e82020"/></svg>
<svg style="left:588.40px;top:194.40px" width="14" height="13" viewBox="0 0 14 13"><path d="M12.6 0.8 L6 7.4" stroke="#222" stroke-width="1.8"/><path d="M6.4 6.6 Q4.2 7 3.6 9 Q3 11 1 11.6 Q4.6 12.6 6.4 10.6 Q7.8 8.6 6.4 6.6Z" fill="#e82020"/></svg>
<svg style="left:620.60px;top:193.40px" width="14" height="14" viewBox="0 0 14 14"><path d="M4 0.6 L9.6 9 M10 0.6 L4.4 9" stroke="#222" stroke-width="1.2"/><ellipse cx="3.6" cy="10.8" rx="2.1" ry="1.9" fill="none" stroke="#e82020" stroke-width="1.2"/><ellipse cx="10.4" cy="10.8" rx="2.1" ry="1.9" fill="none" stroke="#e82020" stroke-width="1.2"/></svg>
<svg style="left:652.60px;top:194.20px" width="14" height="14" viewBox="0 0 14 14"><path d="M12.4 1 L4.4 12.4" stroke="#222" stroke-width="1.5"/><path d="M1.6 2.4 Q4.6 0.6 5.8 4.2 Q7 8.6 5.4 12 M5.6 12.2 Q8.2 12.8 10.2 10.4" fill="none" stroke="#e82020" stroke-width="1.1"/></svg>
<svg style="left:582.60px;top:209.20px" width="10" height="10" viewBox="0 0 10 10"><path d="M5 5 L5 0.3 A4.7 4.7 0 1 0 9.7 5Z" fill="#1f7a4a"/></svg>
<div style="left:595.50px;top:207.60px;width:51.20px;height:15.00px;background:#3399ff;"></div>
<span style="left:598.90px;top:210.00px;font-size:8.80px;line-height:10.12px;color:#10204a;transform:scaleX(0.923);transform-origin:0 50%;">212 - Vector</span>
<div style="left:132.60px;top:222.40px;width:560.00px;height:380.00px;background:#6598c8;border-left:1px solid #7fabd4;border-top:1px solid #7fabd4;"></div>
<div style="left:138.00px;top:245.00px;width:552.00px;height:353.20px;background:#f0f0f0;"></div>
<span style="left:350.70px;top:228.00px;font-size:11.41px;line-height:13.12px;color:#2c3e52;">Select Embroidery Hoop</span>
<div style="left:662.80px;top:222.60px;width:26.00px;height:15.80px;background:#c75050;"></div>
<svg style="left:671.40px;top:227.00px" width="7.4" height="7.4" viewBox="0 0 7.4 7.4"><path d="M1 1L6.4 6.4M6.4 1L1 6.4" stroke="#fff" stroke-width="1.05"/></svg>
<div style="left:138.00px;top:245.00px;width:130.00px;height:321.40px;background:#1b8a3a;"></div>
<div style="left:138.00px;top:245.00px;width:130.00px;height:24.00px;background:#14602a;"></div>
<span style="left:142.50px;top:252.00px;font-size:9.30px;line-height:10.70px;color:#fff;transform:scaleX(0.951);transform-origin:0 50%;font-weight:bold;">Hoops</span>
<div style="left:138.00px;top:275.80px;width:130.00px;height:15.40px;background:#3cb262;"></div>
<span style="left:155.80px;top:279.00px;font-size:9.10px;line-height:10.46px;color:#fff;transform:scaleX(0.811);transform-origin:0 50%;">All</span>
<span style="left:155.80px;top:296.00px;font-size:9.10px;line-height:10.46px;color:#fff;transform:scaleX(0.869);transform-origin:0 50%;">Circle</span>
<span style="left:155.80px;top:313.00px;font-size:9.10px;line-height:10.46px;color:#fff;transform:scaleX(0.896);transform-origin:0 50%;">Horizontal</span>
<span style="left:155.80px;top:330.00px;font-size:9.10px;line-height:10.46px;color:#fff;transform:scaleX(0.895);transform-origin:0 50%;">Vertical</span>
<span style="left:155.80px;top:347.00px;font-size:9.10px;line-height:10.46px;color:#fff;transform:scaleX(0.886);transform-origin:0 50%;">Square</span>
<span style="left:155.80px;top:364.00px;font-size:9.10px;line-height:10.46px;color:#fff;transform:scaleX(0.879);transform-origin:0 50%;">Last Used</span>
<span style="left:155.80px;top:381.00px;font-size:9.10px;line-height:10.46px;color:#fff;transform:scaleX(0.919);transform-origin:0 50%;">Favorites</span>
<svg style="left:276.20px;top:253.80px" width="13" height="12.4" viewBox="0 0 13 12.4"><path d="M6.5 0.7 L8.3 4.1 L12.2 4.7 L9.4 7.4 L10.1 11.3 L6.5 9.5 L2.9 11.3 L3.6 7.4 L0.8 4.7 L4.7 4.1Z" fill="#f5e06c" stroke="#cbb040" stroke-width="0.9" stroke-linejoin="round"/></svg>
<span style="left:275.80px;top:273.00px;font-size:9.30px;line-height:10.70px;color:#000;transform:scaleX(0.882);transform-origin:0 50%;">Machine Brand</span>
<div style="left:351.30px;top:270.20px;width:126.30px;height:15.40px;background:#fff;border:1px solid #b4b7be;"></div>
<div style="left:463.20px;top:271.40px;width:13.20px;height:13.00px;background:#e9e9e9;border:1px solid #b8b8b8;"></div>
<svg style="left:466.40px;top:276.30px" width="7" height="5" viewBox="0 0 7 5"><path d="M0.7 0.8 L3.5 3.8 L6.3 0.8" fill="none" stroke="#444" stroke-width="1.1"/></svg>
<span style="left:354.30px;top:273.00px;font-size:9.30px;line-height:10.70px;color:#000;transform:scaleX(0.862);transform-origin:0 50%;">Brother</span>
<span style="left:497.40px;top:273.00px;font-size:9.30px;line-height:10.70px;color:#000;transform:scaleX(0.853);transform-origin:0 50%;">Model</span>
<div style="left:536.80px;top:270.00px;width:144.00px;height:15.60px;background:#fff;border:1px solid #b4b7be;"></div>
<div style="left:666.40px;top:271.20px;width:13.20px;height:13.20px;background:#e9e9e9;border:1px solid #b8b8b8;"></div>
<svg style="left:669.60px;top:276.20px" width="7" height="5" viewBox="0 0 7 5"><path d="M0.7 0.8 L3.5 3.8 L6.3 0.8" fill="none" stroke="#444" stroke-width="1.1"/></svg>
<span style="left:539.80px;top:273.00px;font-size:9.30px;line-height:10.70px;color:#000;transform:scaleX(0.890);transform-origin:0 50%;">All</span>
<div style="left:272.80px;top:296.80px;width:236.60px;height:247.40px;background:#fff;border:1px solid #9da3ad;"></div>
<div style="left:273.80px;top:297.80px;width:212.60px;height:13.60px;background:#fafcfe;border-bottom:1px solid #e1e6ee;"></div>
<div style="left:294.00px;top:297.80px;width:1.00px;height:13.60px;background:#e3e8f0;"></div>
<div style="left:382.90px;top:297.80px;width:1.00px;height:13.60px;background:#e3e8f0;"></div>
<div style="left:428.90px;top:297.80px;width:1.00px;height:13.60px;background:#e3e8f0;"></div>
<span style="left:276.00px;top:300.00px;font-size:9.30px;line-height:10.70px;color:#000;transform:scaleX(0.885);transform-origin:0 50%;">Fav.</span>
<span style="left:297.50px;top:300.00px;font-size:9.30px;line-height:10.70px;color:#000;transform:scaleX(0.889);transform-origin:0 50%;">Show as</span>
<span style="left:386.50px;top:300.00px;font-size:9.30px;line-height:10.70px;color:#000;transform:scaleX(0.904);transform-origin:0 50%;">Shape</span>
<span style="left:431.70px;top:300.00px;font-size:9.30px;line-height:10.70px;color:#000;transform:scaleX(0.824);transform-origin:0 50%;">Size (mm)</span>
<svg style="left:0.00px;top:0.00px" width="1" height="1" viewBox="0 0 1 1"><defs><linearGradient id="sg" x1="0" y1="0" x2="1" y2="1"><stop offset="0" stop-color="#cfe0f0"/><stop offset="1" stop-color="#8fb2d6"/></linearGradient></defs></svg>
<div style="left:273.80px;top:325.10px;width:212.60px;height:1.00px;background:#cfcfcf;"></div>
<span style="left:297.40px;top:314.00px;font-size:9.30px;line-height:10.70px;color:#000;transform:scaleX(0.866);transform-origin:0 50%;">SA429 Medium Hoop</span>
<span style="left:431.70px;top:314.00px;font-size:9.30px;line-height:10.70px;color:#000;transform:scaleX(0.879);transform-origin:0 50%;">180,0 x 130,0</span>
<svg style="left:401.60px;top:314.40px" width="10" height="7.6" viewBox="0 0 10 7.6"><rect x="0.3" y="0.3" width="9.2" height="6.8" rx="1.5" fill="url(#sg)" stroke="#a9c4de" stroke-width="0.5"/></svg>
<div style="left:273.80px;top:338.90px;width:212.60px;height:1.00px;background:#cfcfcf;"></div>
<span style="left:297.40px;top:328.00px;font-size:9.30px;line-height:10.70px;color:#000;transform:scaleX(0.866);transform-origin:0 50%;">SA431 Small Hoop</span>
<span style="left:431.70px;top:328.00px;font-size:9.30px;line-height:10.70px;color:#000;transform:scaleX(0.879);transform-origin:0 50%;">50,0</span>
<svg style="left:400.80px;top:326.20px" width="11.6" height="11.6" viewBox="0 0 11.6 11.6"><circle cx="5.8" cy="5.8" r="5.5" fill="url(#sg)" stroke="#a0bedc" stroke-width="0.5"/></svg>
<div style="left:273.80px;top:352.70px;width:212.60px;height:1.00px;background:#cfcfcf;"></div>
<span style="left:297.40px;top:342.00px;font-size:9.30px;line-height:10.70px;color:#000;transform:scaleX(0.866);transform-origin:0 50%;">SA432 Regular Hoop</span>
<span style="left:431.70px;top:342.00px;font-size:9.30px;line-height:10.70px;color:#000;transform:scaleX(0.879);transform-origin:0 50%;">100,0</span>
<svg style="left:402.00px;top:341.20px" width="9.2" height="9.2" viewBox="0 0 9.2 9.2"><rect x="0.3" y="0.3" width="8.6" height="8.6" rx="0.5" fill="url(#sg)" stroke="#a9c4de" stroke-width="0.5"/></svg>
<div style="left:273.80px;top:366.50px;width:212.60px;height:1.00px;background:#cfcfcf;"></div>
<span style="left:297.40px;top:356.00px;font-size:9.30px;line-height:10.70px;color:#000;transform:scaleX(0.866);transform-origin:0 50%;">SA434 Super Hoop</span>
<span style="left:431.70px;top:356.00px;font-size:9.30px;line-height:10.70px;color:#000;transform:scaleX(0.879);transform-origin:0 50%;">100,0 x 172,0</span>
<svg style="left:403.00px;top:354.70px" width="7.2" height="9.8" viewBox="0 0 7.2 9.8"><rect x="0.3" y="0.3" width="6.6" height="9.2" rx="1.5" fill="url(#sg)" stroke="#a9c4de" stroke-width="0.5"/></svg>
<div style="left:273.80px;top:380.30px;width:212.60px;height:1.00px;background:#cfcfcf;"></div>
<span style="left:297.40px;top:370.00px;font-size:9.30px;line-height:10.70px;color:#000;transform:scaleX(0.866);transform-origin:0 50%;">SA437 Small Hoop</span>
<span style="left:431.70px;top:370.00px;font-size:9.30px;line-height:10.70px;color:#000;transform:scaleX(0.879);transform-origin:0 50%;">20,0 x 60,0</span>
<svg style="left:403.00px;top:368.50px" width="7.2" height="9.8" viewBox="0 0 7.2 9.8"><rect x="0.3" y="0.3" width="6.6" height="9.2" rx="1.5" fill="url(#sg)" stroke="#a9c4de" stroke-width="0.5"/></svg>
<div style="left:273.80px;top:394.10px;width:212.60px;height:1.00px;background:#cfcfcf;"></div>
<span style="left:297.40px;top:383.00px;font-size:9.30px;line-height:10.70px;color:#000;transform:scaleX(0.866);transform-origin:0 50%;">SA438 Medium Hoop</span>
<span style="left:431.70px;top:383.00px;font-size:9.30px;line-height:10.70px;color:#000;transform:scaleX(0.879);transform-origin:0 50%;">100,0</span>
<svg style="left:402.00px;top:382.60px" width="9.2" height="9.2" viewBox="0 0 9.2 9.2"><rect x="0.3" y="0.3" width="8.6" height="8.6" rx="0.5" fill="url(#sg)" stroke="#a9c4de" stroke-width="0.5"/></svg>
<div style="left:273.80px;top:407.90px;width:212.60px;height:1.00px;background:#cfcfcf;"></div>
<span style="left:297.40px;top:397.00px;font-size:9.30px;line-height:10.70px;color:#000;transform:scaleX(0.866);transform-origin:0 50%;">SA439 Large Hoop</span>
<span style="left:431.70px;top:397.00px;font-size:9.30px;line-height:10.70px;color:#000;transform:scaleX(0.879);transform-origin:0 50%;">180,0 x 130,0</span>
<svg style="left:401.60px;top:397.20px" width="10" height="7.6" viewBox="0 0 10 7.6"><rect x="0.3" y="0.3" width="9.2" height="6.8" rx="1.5" fill="url(#sg)" stroke="#a9c4de" stroke-width="0.5"/></svg>
<div style="left:273.80px;top:421.70px;width:212.60px;height:1.00px;background:#cfcfcf;"></div>
<span style="left:297.40px;top:411.00px;font-size:9.30px;line-height:10.70px;color:#000;transform:scaleX(0.866);transform-origin:0 50%;">SA440 Jumbo XLarge</span>
<span style="left:431.70px;top:411.00px;font-size:9.30px;line-height:10.70px;color:#000;transform:scaleX(0.879);transform-origin:0 50%;">300,0 x 180,0</span>
<svg style="left:401.60px;top:411.00px" width="10" height="7.6" viewBox="0 0 10 7.6"><rect x="0.3" y="0.3" width="9.2" height="6.8" rx="1.5" fill="url(#sg)" stroke="#a9c4de" stroke-width="0.5"/></svg>
<div style="left:273.80px;top:435.50px;width:212.60px;height:1.00px;background:#cfcfcf;"></div>
<span style="left:297.40px;top:425.00px;font-size:9.30px;line-height:10.70px;color:#000;transform:scaleX(0.866);transform-origin:0 50%;">SA441 Extra Large</span>
<span style="left:431.70px;top:425.00px;font-size:9.30px;line-height:10.70px;color:#000;transform:scaleX(0.879);transform-origin:0 50%;">260,0 x 160,0</span>
<svg style="left:401.60px;top:424.80px" width="10" height="7.6" viewBox="0 0 10 7.6"><rect x="0.3" y="0.3" width="9.2" height="6.8" rx="1.5" fill="url(#sg)" stroke="#a9c4de" stroke-width="0.5"/></svg>
<div style="left:273.80px;top:449.30px;width:212.60px;height:1.00px;background:#cfcfcf;"></div>
<span style="left:297.40px;top:439.00px;font-size:9.30px;line-height:10.70px;color:#000;transform:scaleX(0.866);transform-origin:0 50%;">SA443 Medium Hoop</span>
<span style="left:431.70px;top:439.00px;font-size:9.30px;line-height:10.70px;color:#000;transform:scaleX(0.879);transform-origin:0 50%;">100,0</span>
<svg style="left:402.00px;top:437.80px" width="9.2" height="9.2" viewBox="0 0 9.2 9.2"><rect x="0.3" y="0.3" width="8.6" height="8.6" rx="0.5" fill="url(#sg)" stroke="#a9c4de" stroke-width="0.5"/></svg>
<div style="left:273.80px;top:463.10px;width:212.60px;height:1.00px;background:#cfcfcf;"></div>
<span style="left:297.40px;top:452.00px;font-size:9.30px;line-height:10.70px;color:#000;transform:scaleX(0.866);transform-origin:0 50%;">SA444 Large Hoop</span>
<span style="left:431.70px;top:452.00px;font-size:9.30px;line-height:10.70px;color:#000;transform:scaleX(0.879);transform-origin:0 50%;">180,0 x 130,0</span>
<svg style="left:401.60px;top:452.40px" width="10" height="7.6" viewBox="0 0 10 7.6"><rect x="0.3" y="0.3" width="9.2" height="6.8" rx="1.5" fill="url(#sg)" stroke="#a9c4de" stroke-width="0.5"/></svg>
<div style="left:273.80px;top:476.90px;width:212.60px;height:1.00px;background:#cfcfcf;"></div>
<span style="left:297.40px;top:466.00px;font-size:9.30px;line-height:10.70px;color:#000;transform:scaleX(0.866);transform-origin:0 50%;">SA445 Extra Large</span>
<span style="left:431.70px;top:466.00px;font-size:9.30px;line-height:10.70px;color:#000;transform:scaleX(0.879);transform-origin:0 50%;">130,0 x 300,0</span>
<svg style="left:403.00px;top:465.10px" width="7.2" height="9.8" viewBox="0 0 7.2 9.8"><rect x="0.3" y="0.3" width="6.6" height="9.2" rx="1.5" fill="url(#sg)" stroke="#a9c4de" stroke-width="0.5"/></svg>
<div style="left:273.80px;top:490.70px;width:212.60px;height:1.00px;background:#cfcfcf;"></div>
<span style="left:297.40px;top:480.00px;font-size:9.30px;line-height:10.70px;color:#000;transform:scaleX(0.866);transform-origin:0 50%;">SA446 Quilting</span>
<span style="left:431.70px;top:480.00px;font-size:9.30px;line-height:10.70px;color:#000;transform:scaleX(0.879);transform-origin:0 50%;">100,0</span>
<svg style="left:402.00px;top:479.20px" width="9.2" height="9.2" viewBox="0 0 9.2 9.2"><rect x="0.3" y="0.3" width="8.6" height="8.6" rx="0.5" fill="url(#sg)" stroke="#a9c4de" stroke-width="0.5"/></svg>
<div style="left:273.80px;top:504.50px;width:212.60px;height:1.00px;background:#cfcfcf;"></div>
<span style="left:297.40px;top:494.00px;font-size:9.30px;line-height:10.70px;color:#000;transform:scaleX(0.866);transform-origin:0 50%;">SA447 Jumbo Hoop</span>
<span style="left:431.70px;top:494.00px;font-size:9.30px;line-height:10.70px;color:#000;transform:scaleX(0.879);transform-origin:0 50%;">300,0 x 200,0</span>
<svg style="left:401.60px;top:493.80px" width="10" height="7.6" viewBox="0 0 10 7.6"><rect x="0.3" y="0.3" width="9.2" height="6.8" rx="1.5" fill="url(#sg)" stroke="#a9c4de" stroke-width="0.5"/></svg>
<div style="left:273.80px;top:518.30px;width:212.60px;height:1.00px;background:#cfcfcf;"></div>
<span style="left:297.40px;top:508.00px;font-size:9.30px;line-height:10.70px;color:#000;transform:scaleX(0.866);transform-origin:0 50%;">SABF6000D Border</span>
<span style="left:431.70px;top:508.00px;font-size:9.30px;line-height:10.70px;color:#000;transform:scaleX(0.879);transform-origin:0 50%;">180,0 x 100,0</span>
<svg style="left:401.60px;top:507.60px" width="10" height="7.6" viewBox="0 0 10 7.6"><rect x="0.3" y="0.3" width="9.2" height="6.8" rx="1.5" fill="url(#sg)" stroke="#a9c4de" stroke-width="0.5"/></svg>
<div style="left:273.80px;top:532.10px;width:212.60px;height:1.00px;background:#cfcfcf;"></div>
<div style="left:295.00px;top:519.30px;width:88.40px;height:12.60px;background:#3399ff;"></div>
<div style="left:430.00px;top:519.30px;width:56.40px;height:12.60px;background:#3399ff;"></div>
<div style="left:274.20px;top:518.80px;width:212.00px;height:14.20px;border:1px dotted #555;"></div>
<span style="left:297.40px;top:521.00px;font-size:9.30px;line-height:10.70px;color:#fff;transform:scaleX(0.866);transform-origin:0 50%;">Standard 4x4</span>
<span style="left:431.70px;top:521.00px;font-size:9.30px;line-height:10.70px;color:#fff;transform:scaleX(0.879);transform-origin:0 50%;">100,0</span>
<svg style="left:402.00px;top:520.60px" width="9.2" height="9.2" viewBox="0 0 9.2 9.2"><rect x="0.3" y="0.3" width="8.6" height="8.6" rx="0.5" fill="url(#sg)" stroke="#a9c4de" stroke-width="0.5"/></svg>
<div style="left:294.00px;top:311.80px;width:1.00px;height:220.80px;background:#cfcfcf;"></div>
<div style="left:382.90px;top:311.80px;width:1.00px;height:220.80px;background:#cfcfcf;"></div>
<div style="left:428.90px;top:311.80px;width:1.00px;height:220.80px;background:#cfcfcf;"></div>
<div style="left:485.90px;top:311.80px;width:1.00px;height:220.80px;background:#cfcfcf;"></div>
<div style="left:496.20px;top:297.80px;width:12.20px;height:245.40px;background:#f0f0f0;"></div>
<svg style="left:498.40px;top:301.60px" width="7.2" height="5" viewBox="0 0 7.2 5"><path d="M0.7 4.2 L3.6 1 L6.5 4.2" fill="none" stroke="#444" stroke-width="1.2"/></svg>
<svg style="left:498.40px;top:534.80px" width="7.2" height="5" viewBox="0 0 7.2 5"><path d="M0.7 0.8 L3.6 4 L6.5 0.8" fill="none" stroke="#444" stroke-width="1.2"/></svg>
<div style="left:496.40px;top:489.00px;width:12.00px;height:41.80px;background:#cdcdcd;"></div>
<div style="left:273.60px;top:550.40px;width:56.40px;height:17.20px;border:1px solid #acacac;background:linear-gradient(#f2f2f2,#e4e4e4);"></div>
<span style="left:294.73px;top:554.00px;font-size:9.30px;line-height:10.70px;color:#000;transform:scaleX(0.882);transform-origin:0 50%;">Edit</span>
<div style="left:336.00px;top:550.40px;width:55.80px;height:17.20px;border:1px solid #acacac;background:linear-gradient(#f2f2f2,#e4e4e4);"></div>
<span style="left:356.60px;top:554.00px;font-size:9.30px;line-height:10.70px;color:#000;transform:scaleX(0.882);transform-origin:0 50%;">Add</span>
<div style="left:398.20px;top:550.40px;width:55.80px;height:17.20px;border:1px solid #acacac;background:linear-gradient(#f2f2f2,#e4e4e4);"></div>
<span style="left:414.25px;top:554.00px;font-size:9.30px;line-height:10.70px;color:#000;transform:scaleX(0.882);transform-origin:0 50%;">Delete</span>
<div style="left:587.60px;top:550.40px;width:92.20px;height:17.20px;border:1px solid #acacac;background:linear-gradient(#f2f2f2,#e4e4e4);"></div>
<span style="left:605.66px;top:554.00px;font-size:9.30px;line-height:10.70px;color:#000;transform:scaleX(0.882);transform-origin:0 50%;">Open database</span>
<div style="left:565.30px;top:574.40px;width:56.30px;height:17.80px;border:1px solid #3399ff;background:linear-gradient(#f2f2f2,#e4e4e4);box-shadow:inset 0 0 0 1px #bfe0ff;"></div>
<span style="left:587.53px;top:578.00px;font-size:9.30px;line-height:10.70px;color:#000;transform:scaleX(0.882);transform-origin:0 50%;">OK</span>
<div style="left:625.20px;top:574.40px;width:55.80px;height:17.80px;border:1px solid #acacac;background:linear-gradient(#f2f2f2,#e4e4e4);"></div>
<span style="left:640.34px;top:578.00px;font-size:9.30px;line-height:10.70px;color:#000;transform:scaleX(0.882);transform-origin:0 50%;">Cancel</span>
<span style="left:518.80px;top:297.00px;font-size:9.30px;line-height:10.70px;color:#000;transform:scaleX(0.878);transform-origin:0 50%;">Selected hoop:</span>
<span style="left:531.00px;top:313.00px;font-size:9.30px;line-height:10.70px;color:#000;transform:scaleX(0.878);transform-origin:0 50%;">Standard 4x4</span>
<span style="left:518.80px;top:333.00px;font-size:9.30px;line-height:10.70px;color:#000;transform:scaleX(0.851);transform-origin:0 50%;">Compatible with:</span>
<div style="left:520px;top:346px;width:167px;height:174.4px;overflow:hidden">
<span style="left:10.60px;top:2.00px;font-size:9.3px;line-height:10.70px;color:#000;transform:scaleX(0.882);transform-origin:0 50%">Babylock - Ellagéo</span>
<span style="left:10.60px;top:12.00px;font-size:9.3px;line-height:10.70px;color:#000;transform:scaleX(0.882);transform-origin:0 50%">Babylock - Espree</span>
<span style="left:10.60px;top:22.00px;font-size:9.3px;line-height:10.70px;color:#000;transform:scaleX(0.882);transform-origin:0 50%">Babylock - Essante 1</span>
<span style="left:10.60px;top:32.00px;font-size:9.3px;line-height:10.70px;color:#000;transform:scaleX(0.882);transform-origin:0 50%">Babylock - Essante 2</span>
<span style="left:10.60px;top:42.00px;font-size:9.3px;line-height:10.70px;color:#000;transform:scaleX(0.882);transform-origin:0 50%">Brother - PC-6500</span>
<span style="left:10.60px;top:52.00px;font-size:9.3px;line-height:10.70px;color:#000;transform:scaleX(0.882);transform-origin:0 50%">Brother - PC-8200</span>
<span style="left:10.60px;top:62.00px;font-size:9.3px;line-height:10.70px;color:#000;transform:scaleX(0.882);transform-origin:0 50%">Brother - PC-8500</span>
<span style="left:10.60px;top:72.00px;font-size:9.3px;line-height:10.70px;color:#000;transform:scaleX(0.882);transform-origin:0 50%">Brother - PE-100</span>
<span style="left:10.60px;top:81.00px;font-size:9.3px;line-height:10.70px;color:#000;transform:scaleX(0.882);transform-origin:0 50%">Brother - PE-150</span>
<span style="left:10.60px;top:91.00px;font-size:9.3px;line-height:10.70px;color:#000;transform:scaleX(0.882);transform-origin:0 50%">Brother - PE-180D</span>
<span style="left:10.60px;top:101.00px;font-size:9.3px;line-height:10.70px;color:#000;transform:scaleX(0.882);transform-origin:0 50%">Brother - PE-200</span>
<span style="left:10.60px;top:111.00px;font-size:9.3px;line-height:10.70px;color:#000;transform:scaleX(0.882);transform-origin:0 50%">Brother - PE-300S</span>
<span style="left:10.60px;top:121.00px;font-size:9.3px;line-height:10.70px;color:#000;transform:scaleX(0.882);transform-origin:0 50%">Brother - PE-400D</span>
<span style="left:10.60px;top:131.00px;font-size:9.3px;line-height:10.70px;color:#000;transform:scaleX(0.882);transform-origin:0 50%">Brother - PR-600</span>
<span style="left:10.60px;top:141.00px;font-size:9.3px;line-height:10.70px;color:#000;transform:scaleX(0.882);transform-origin:0 50%">Brother - ULT-2001</span>
<span style="left:10.60px;top:151.00px;font-size:9.3px;line-height:10.70px;color:#000;transform:scaleX(0.882);transform-origin:0 50%">Brother - ULT-2002D</span>
<span style="left:10.60px;top:161.00px;font-size:9.3px;line-height:10.70px;color:#000;transform:scaleX(0.882);transform-origin:0 50%">Husqvarna/Viking - Designer 1</span>
<span style="left:10.60px;top:171.00px;font-size:9.3px;line-height:10.70px;color:#000;transform:scaleX(0.882);transform-origin:0 50%">Husqvarna/Viking - Designer SE</span>
</div>
</div></body></html>
